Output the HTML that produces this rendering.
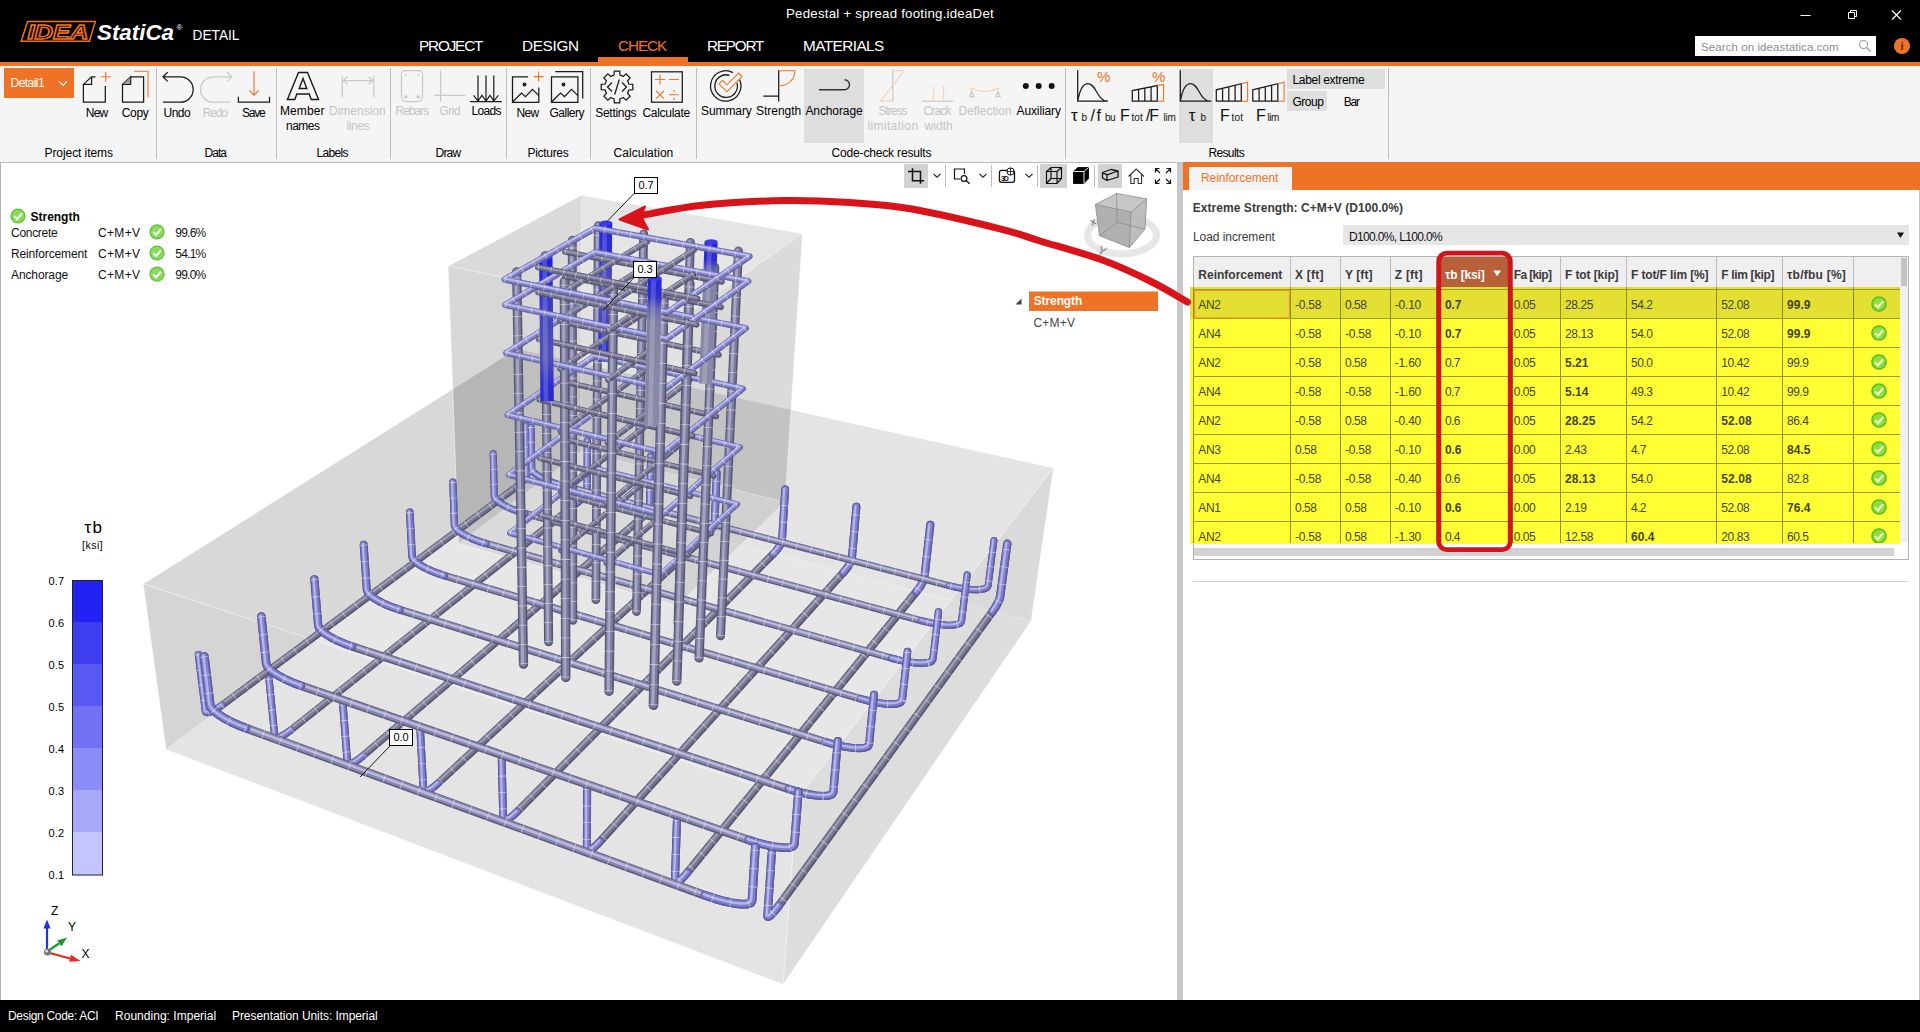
<!DOCTYPE html>
<html lang="en">
<head>
<meta charset="utf-8">
<title>Pedestal + spread footing.ideaDet</title>
<style>
*{box-sizing:border-box;margin:0;padding:0}
html,body{width:1920px;height:1032px;overflow:hidden;background:#fff}
body{position:relative;font-family:"Liberation Sans",sans-serif;font-size:12px;color:#000}
.abs,.t{position:absolute;white-space:nowrap}
.t{line-height:1;}
#hdr{position:absolute;left:0;top:0;width:1920px;height:62px;background:#000}
#oline{position:absolute;left:0;top:62px;width:1920px;height:4px;background:#ee7326}
#rib{position:absolute;left:0;top:66px;width:1920px;height:96px;background:#f5f5f5}
.sep{position:absolute;top:68px;width:1px;height:91px;background:#bdbdbd}
.lbl{position:absolute;white-space:nowrap;font-size:12px;line-height:15px;text-align:center;color:#000;transform:translateX(-50%)}
.dis{color:#c3c3c3}
.grp{position:absolute;white-space:nowrap;font-size:12px;line-height:15px;top:145px;transform:translateX(-50%)}
#status{position:absolute;left:0;top:1000px;width:1920px;height:32px;background:#000;color:#fff}
#view{position:absolute;left:0;top:162px;width:1177px;height:838px;background:#fff;border-left:1px solid #b4b4b4;border-top:1px solid #b8b8b8}
#split{position:absolute;left:1177px;top:162px;width:6px;height:838px;background:#c8c8c8}
#panel{position:absolute;left:1183px;top:162px;width:737px;height:838px;background:#fff}
svg{position:absolute;overflow:visible}
</style>
</head>
<body>
<div id="hdr">
 <svg id="logo" style="left:0;top:0" width="260" height="62" viewBox="0 0 260 62">
  <path d="M27.600 21.600H95.300L89.400 41.200H21.200Z" fill="none" stroke="#ee7326" stroke-width="1.500"/>
  <text x="27.500" y="38.600" font-family="Liberation Sans, sans-serif" font-weight="bold" font-style="italic" font-size="20" textLength="61" lengthAdjust="spacingAndGlyphs" fill="#1a0a00" stroke="#ee7326" stroke-width="1.300">IDEA</text>
  <text x="97" y="39.5" font-family="Liberation Sans, sans-serif" font-weight="bold" font-style="italic" font-size="21.5" textLength="77" lengthAdjust="spacingAndGlyphs" fill="#fff">StatiCa</text>
  <text x="176.5" y="30" font-family="Liberation Sans, sans-serif" font-size="8" fill="#fff">®</text>
  <text x="192.5" y="40" font-family="Liberation Sans, sans-serif" font-size="14.5" textLength="47" lengthAdjust="spacingAndGlyphs" fill="#fff">DETAIL</text>
 </svg>
 <div class="abs" style="left:598px;top:57px;width:90px;height:5px;background:#ee7326"></div>
 <!-- window controls -->
 <svg style="left:1790px;top:0" width="130" height="30" viewBox="0 0 130 30">
  <path d="M10.5 15.5h10" stroke="#fff" stroke-width="1" fill="none"/>
  <path d="M58.500 12.500h6v6h-6z M60.5 12.500v-2h6v6h-2" stroke="#fff" stroke-width="1" fill="none"/>
  <path d="M102 10.500l9 9M111 10.500l-9 9" stroke="#fff" stroke-width="1.1" fill="none"/>
 </svg>
 <!-- search -->
 <div class="abs" style="left:1695px;top:36px;width:181px;height:20px;background:#fff"></div>
 <svg style="left:1857px;top:38px" width="16" height="16" viewBox="0 0 16 16"><circle cx="6.500" cy="6.500" r="4" stroke="#9a9a9a" stroke-width="1.1" fill="none"/><path d="M9.500 9.500l4 4" stroke="#9a9a9a" stroke-width="1.3"/></svg>
 <div class="abs" style="left:1894px;top:38px;width:16px;height:16px;border-radius:8px;background:#ee7326"></div>
 <div class="t" style="left:1900px;top:40px;font-size:11px;line-height:12px;font-weight:bold;color:#5a2300;width:4px;text-align:center">i</div>
</div>
<div id="oline"></div>
<div id="rib"></div>
<div class="abs" style="left:4px;top:68px;width:70px;height:30px;background:#ee7326"></div>
<div class="abs" style="left:804px;top:69px;width:60px;height:73.500px;background:#dedede"></div>
<div class="abs" style="left:1179px;top:69px;width:33.500px;height:73.500px;background:#dedede"></div>
<div class="abs" style="left:1287px;top:69px;width:98px;height:19.500px;background:#dedede"></div>
<div class="abs" style="left:1287px;top:91px;width:40px;height:20px;background:#dedede"></div>
<div class="sep" style="left:156px"></div><div class="sep" style="left:275.500px"></div><div class="sep" style="left:390px"></div>
<div class="sep" style="left:506px"></div><div class="sep" style="left:590px"></div><div class="sep" style="left:696px"></div>
<div class="sep" style="left:1065px"></div><div class="sep" style="left:1388px"></div>
<svg id="ribicons" style="left:0;top:66px" width="1920" height="96" viewBox="0 66 1920 96" fill="none" stroke="#1a1a1a" stroke-width="1.25" stroke-linejoin="miter">
 <!-- chevron -->
 <path d="M59 81.300l4 4 4-4" stroke="#fff" stroke-width="1.2"/>
 <!-- New page -->
 <path d="M95.500 76.800H91.600L83.400 84.400V102.200H105.300V86 M83.400 84.400H91.600V76.800"/>
 <path d="M105.700 71.800v10M100.700 76.800h10" stroke="#ee7326" stroke-width="1.1"/>
 <!-- Copy -->
 <path d="M130.700 76.800H143.600V102.200H122.500V84.400L130.700 76.800V84.400H122.500"/>
 <path d="M123.500 83.800l6.600-6.200v6.200z" fill="#999" stroke="none"/>
 <path d="M134.200 71.300H148V97.200" stroke="#ee7326" stroke-width="1.1"/>
 <!-- Undo -->
 <path d="M167.700 72.200L162.900 76.800L167.700 81.400M162.900 76.800H180.500A12.700 12.700 0 0 1 180.500 102.200H163"/>
 <!-- Redo -->
 <path d="M227.100 72.200L231.900 76.800L227.100 81.400M231.900 76.800H213.300A12.700 12.700 0 0 0 213.300 102.200H230.400" stroke="#c9c9c9"/>
 <!-- Save -->
 <path d="M254 71.300V95M249.500 90.500L254 95.200L258.500 90.500" stroke="#ee7326" stroke-width="1.1"/>
 <path d="M238.400 96.800V102.200H269.500V96.800"/>
 <!-- Member names A -->
 <path d="M298.500 72.500H307.500L318.600 99.500H311.200L309.200 94H296.800L294.800 99.500H287.400Z M299.200 88.500H306.800L303 78.500Z" stroke-width="1.4"/>
 <!-- Dimension lines -->
 <path d="M342.300 76V97.300M373.800 76V97.300M343.500 80.500H372.500M347.500 76.800L343.300 80.500L347.500 84.200M368.600 76.800L372.800 80.500L368.600 84.200" stroke="#c9c9c9"/>
 <!-- Rebars -->
 <rect x="401.500" y="70.500" width="21" height="31" rx="4" stroke="#c9c9c9"/>
 <g fill="#c9c9c9" stroke="none"><circle cx="405.800" cy="75.200" r="1"/><circle cx="418.200" cy="75.200" r="1"/><circle cx="405.800" cy="97" r="1.800"/><circle cx="418.200" cy="97" r="1.800"/></g>
 <!-- Grid -->
 <path d="M440.600 70.500V101.800M434.300 95.300H465.300" stroke="#c9c9c9"/>
 <!-- Loads -->
 <path d="M478 75.500V101M486 75.500V101M493.800 75.500V101M470 101.600H501.800M473.500 95.300L478 101L482 95.300L486 101L490 95.300L493.800 101L498.300 95.300" stroke-width="1.2"/>
 <!-- Pictures New -->
 <path d="M528 76.800H512.500V102.400H538.800V87.500M512.800 101.800L521.500 93L525.500 96.600L532.500 89.300L538.600 95.400"/>
 <circle cx="524.500" cy="84.500" r="1.900" fill="#1a1a1a" stroke="none"/>
 <path d="M538.600 71.600v10M533.600 76.600h10" stroke="#ee7326" stroke-width="1.1"/>
 <!-- Gallery -->
 <path d="M551.500 76.800H577.900V102.400H551.500ZM551.800 101.800L560.500 93L564.500 96.600L571.500 89.300L577.600 95.400M555.300 71.600H582.700V98.500"/>
 <circle cx="563.500" cy="84.500" r="1.900" fill="#1a1a1a" stroke="none"/>
 <!-- Settings gear -->
 <path d="M614.0 75.2L614.3 71.2L619.7 71.2L620.0 75.2A12.2 12.2 0 0 1 623.2 76.5L626.2 73.9L630.1 77.8L627.5 80.8A12.2 12.2 0 0 1 628.8 84.0L632.8 84.3L632.8 89.7L628.8 90.0A12.2 12.2 0 0 1 627.5 93.2L630.1 96.2L626.2 100.1L623.2 97.5A12.2 12.2 0 0 1 620.0 98.8L619.7 102.8L614.3 102.8L614.0 98.8A12.2 12.2 0 0 1 610.8 97.5L607.8 100.1L603.9 96.2L606.5 93.2A12.2 12.2 0 0 1 605.2 90.0L601.2 89.7L601.2 84.3L605.2 84.0A12.2 12.2 0 0 1 606.5 80.8L603.9 77.8L607.8 73.9L610.8 76.5A12.2 12.2 0 0 1 614.0 75.2Z"/>
 <path d="M612 82.500L607.500 87L612 91.500M622 82.500L626.500 87L622 91.500M619.300 79.500L614.700 94.500"/>
 <!-- Calculate -->
 <rect x="651.500" y="71.800" width="30.800" height="30.400"/>
 <path d="M660 74.500V84.500M655 79.500H665M669 79.500H679M656.200 91L663.800 98.600M663.800 91L656.200 98.600M669 94.800H679" stroke="#ee7326" stroke-width="1.1"/>
 <circle cx="674" cy="90.800" r="0.900" fill="#ee7326" stroke="none"/><circle cx="674" cy="98.800" r="0.900" fill="#ee7326" stroke="none"/>
 <!-- Summary -->
 <path d="M739.500 79.500A15.200 15.200 0 1 1 733 72.600" stroke-width="1.3"/>
 <path d="M737 83A11.300 11.300 0 1 1 729.500 75.300" stroke-width="1.3"/>
 <path d="M719 83.800L722.500 80.300L727 84.800L738.500 73L742 76.500L727 91.800Z" stroke="#ee7326" stroke-width="1.1"/>
 <!-- Strength -->
 <path d="M778.700 70.300V101.500M763.300 96.200H778.700"/>
 <path d="M778.700 70.800H795C794.500 80 788 85.500 778.700 86" stroke="#ee7326" stroke-width="1.1"/>
 <!-- Anchorage -->
 <path d="M819 89.800H844.500A5 5 0 0 0 844.500 79.800" stroke="#333" stroke-width="1.4"/>
 <!-- Stress limitation -->
 <path d="M892.800 70.300V101.500" stroke="#c9c9c9"/>
 <path d="M892.800 70.800H904L880.800 101H892.800" stroke="#f6cdb3" stroke-width="1.1"/>
 <!-- Crack width -->
 <path d="M922 101.200H953.300" stroke="#c9c9c9"/>
 <path d="M933.500 86.500C931.500 89.500 935.500 92 933.500 95C932.500 96.800 932.800 98 933.500 99.500M943.500 86.500C941.500 89.500 945.500 92 943.500 95C942.500 96.800 942.800 98 943.500 99.500" stroke="#f6cdb3" stroke-width="1.1"/>
 <!-- Deflection -->
 <path d="M971.700 91.500L969.600 96.500H973.800ZM998 91.500L995.900 96.500H1000.100Z" stroke="#c9c9c9"/>
 <path d="M971.700 88.500Q985 94.500 998 88.500" stroke="#f6cdb3" stroke-width="1.1"/>
 <circle cx="971.700" cy="88.500" r="1.200" fill="#f6cdb3" stroke="none"/><circle cx="998" cy="88.500" r="1.200" fill="#f6cdb3" stroke="none"/>
 <!-- Auxiliary -->
 <g fill="#111" stroke="none"><circle cx="1025.800" cy="86" r="3"/><circle cx="1038.700" cy="86" r="3"/><circle cx="1051.700" cy="86" r="3"/></g>
 <!-- Results: curve 1 -->
 <path d="M1077.700 70.200V101.200H1108M1077.700 101.200C1080 88 1084 83.500 1088 83.500C1096 83.500 1097 100.500 1107 101.200"/>
 <!-- bars 1 -->
 <path d="M1132.3 101.2V90.6L1157.3 85.6V101.2ZM1138.6 89.4V101.2M1144.8 88.1V101.2M1151.1 86.9V101.2"/>
 <path d="M1157.3 85.6L1163.6 84.4V101.2H1157.3" stroke="#ee7326" stroke-width="1.100"/>
 <!-- curve 2 (tau b) -->
 <path d="M1180.300 70.200V101.200H1211.500M1180.300 101.200C1182.600 88 1186.600 83.500 1190.600 83.500C1198.600 83.500 1199.600 100.500 1209.600 101.200"/>
 <!-- bars 2 -->
 <path d="M1216.3 101.2V89.8L1241.3 83.7V101.2ZM1222.6 88.3V101.2M1228.8 86.8V101.2M1235.1 85.2V101.2"/>
 <path d="M1241.3 83.7L1247.6 82.2V101.2H1241.3" stroke="#ee7326" stroke-width="1.100"/>
 <!-- bars 3 -->
 <path d="M1252.8 101.2V89.8L1277.8 83.7V101.2ZM1259.1 88.3V101.2M1265.3 86.8V101.2M1271.6 85.2V101.2"/>
 <path d="M1277.8 83.7L1284.1 82.2V101.2H1277.8" stroke="#ee7326" stroke-width="1.100"/>
</svg>
<div id="view"></div>
<svg id="model" style="left:0;top:0" width="1177" height="998" viewBox="0 0 1177 998">
<path d="M166 749.5 L783.1 984.4 L1031 621.3 L519.5 486.8Z" fill="rgba(0,0,0,0.051)"/>
<path d="M166 749.5 L519.5 486.8 L517 348.7 L143.2 583.9Z" fill="rgba(0,0,0,0.113)"/>
<path d="M519.5 486.8 L1031 621.3 L1053.5 467.9 L517 348.7Z" fill="rgba(0,0,0,0.064)"/>
<path d="M143.2 583.9 L797.1 798.7 L1053.5 467.9 L517 348.7Z" fill="rgba(0,0,0,0.045)"/>
<path d="M166 749.5 L783.1 984.4 L797.1 798.7 L143.2 583.9Z" fill="rgba(0,0,0,0.053)"/>
<path d="M783.1 984.4 L1031 621.3 L1053.5 467.9 L797.1 798.7Z" fill="rgba(0,0,0,0.088)"/>
<path d="M143.2 583.9 L797.1 798.7M797.1 798.7 L1053.5 467.9M1053.5 467.9 L517 348.7M517 348.7 L143.2 583.9M166 749.5 L143.2 583.9M783.1 984.4 L797.1 798.7M1031 621.3 L1053.5 467.9M166 749.5 L783.1 984.4M783.1 984.4 L1031 621.3" stroke="#fff" stroke-width="0.9" fill="none" opacity="0.55"/>
<path d="M519.5 486.8 L517 348.7M166 749.5 L519.5 486.8M519.5 486.8 L1031 621.3" stroke="#fff" stroke-width="0.8" fill="none" opacity="0.35"/>
<path d="M458.4 543.7 L677.3 606.1 L785.1 502.1 L581 451.5Z" fill="rgba(0,0,0,0.0)"/>
<path d="M458.4 543.7 L581 451.5 L581.4 195.2 L448.1 266.1Z" fill="rgba(0,0,0,0.105)"/>
<path d="M581 451.5 L785.1 502.1 L802.5 233.5 L581.4 195.2Z" fill="rgba(0,0,0,0.06)"/>
<path d="M448.1 266.1 L686.7 314.3 L802.5 233.5 L581.4 195.2Z" fill="rgba(0,0,0,0.045)"/>
<path d="M458.4 543.7 L677.3 606.1 L686.7 314.3 L448.1 266.1Z" fill="rgba(0,0,0,0.055)"/>
<path d="M677.3 606.1 L785.1 502.1 L802.5 233.5 L686.7 314.3Z" fill="rgba(0,0,0,0.085)"/>
<path d="M448.1 266.1 L686.7 314.3M686.7 314.3 L802.5 233.5M802.5 233.5 L581.4 195.2M581.4 195.2 L448.1 266.1M458.4 543.7 L448.1 266.1M677.3 606.1 L686.7 314.3M785.1 502.1 L802.5 233.5M458.4 543.7 L677.3 606.1M677.3 606.1 L785.1 502.1" stroke="#fff" stroke-width="0.9" fill="none" opacity="0.55"/>
<path d="M581 451.5 L581.4 195.2M458.4 543.7 L581 451.5M581 451.5 L785.1 502.1" stroke="#fff" stroke-width="0.8" fill="none" opacity="0.35"/>
<defs><linearGradient id="ag1" gradientUnits="userSpaceOnUse" x1="604.8" y1="361.6" x2="605.9" y2="223"><stop offset="0" stop-color="#2828d8"/><stop offset="0.2" stop-color="#3838c8"/><stop offset="0.5" stop-color="#5656b6"/><stop offset="0.8" stop-color="#3030d0"/><stop offset="1" stop-color="#2020e0"/></linearGradient><linearGradient id="ag2" gradientUnits="userSpaceOnUse" x1="705.6" y1="383.8" x2="711.1" y2="241.9"><stop offset="0" stop-color="#8a8aa8"/><stop offset="0.7" stop-color="#8282a4"/><stop offset="0.8" stop-color="#6666b0"/><stop offset="0.87" stop-color="#3030d0"/><stop offset="1" stop-color="#2424dc"/></linearGradient><linearGradient id="ag3" gradientUnits="userSpaceOnUse" x1="547.1" y1="401.3" x2="545.8" y2="257.1"><stop offset="0" stop-color="#2626d6"/><stop offset="0.14" stop-color="#3030cc"/><stop offset="0.3" stop-color="#5050b8"/><stop offset="0.6" stop-color="#4444c4"/><stop offset="0.82" stop-color="#2a2ad8"/><stop offset="1" stop-color="#2020e0"/></linearGradient><linearGradient id="ag4" gradientUnits="userSpaceOnUse" x1="651.4" y1="425.9" x2="654.8" y2="278.2"><stop offset="0" stop-color="#8a8aa8"/><stop offset="0.7" stop-color="#8282a4"/><stop offset="0.8" stop-color="#6666b0"/><stop offset="0.87" stop-color="#3030d0"/><stop offset="1" stop-color="#2424dc"/></linearGradient></defs>
<path d="M198.4 654.5 L205.4 711.3 L206 712.3 L207.3 712.6 L209.4 712.3 L212 711.4 L215.1 709.8 L218.5 707.7 L222 705.3 L516.8 486.7 L519 484.9 L521.2 483 L523.1 480.9 L524.7 479 L525.9 477.2 L526.6 475.6 L526.8 474.3 L526.1 426" stroke="#54546a" stroke-width="7.2" stroke-linecap="round" stroke-linejoin="round" fill="none"/>
<path d="M198.4 654.5 L205.4 711.3 L206 712.3 L207.3 712.6 L209.4 712.3 L212 711.4 L215.1 709.8 L218.5 707.7 L222 705.3 L516.8 486.7 L519 484.9 L521.2 483 L523.1 480.9 L524.7 479 L525.9 477.2 L526.6 475.6 L526.8 474.3 L526.1 426" stroke="#74748e" stroke-width="5.2" stroke-linecap="round" stroke-linejoin="round" fill="none" transform="translate(-0.3 -0.5)"/>
<path d="M198.4 654.5 L205.4 711.3 L206 712.3 L207.3 712.6 L209.4 712.3 L212 711.4 L215.1 709.8 L218.5 707.7 L222 705.3 L516.8 486.7 L519 484.9 L521.2 483 L523.1 480.9 L524.7 479 L525.9 477.2 L526.6 475.6 L526.8 474.3 L526.1 426" stroke="#9c9cb4" stroke-width="2.2" stroke-linecap="round" stroke-linejoin="round" fill="none" transform="translate(-0.8 -1.1)"/>
<path d="M198.4 654.5 L205.4 711.3 L206 712.3 L207.3 712.6 L209.4 712.3 L212 711.4 L215.1 709.8 L218.5 707.7 L222 705.3" stroke="#5c5ca4" stroke-width="7.2" stroke-linecap="round" stroke-linejoin="round" fill="none"/>
<path d="M198.4 654.5 L205.4 711.3 L206 712.3 L207.3 712.6 L209.4 712.3 L212 711.4 L215.1 709.8 L218.5 707.7 L222 705.3" stroke="#8080c8" stroke-width="5" stroke-linecap="round" stroke-linejoin="round" fill="none" transform="translate(-0.3 -0.4)"/>
<path d="M198.4 654.5 L205.4 711.3 L206 712.3 L207.3 712.6 L209.4 712.3 L212 711.4 L215.1 709.8 L218.5 707.7 L222 705.3" stroke="#b4b4ee" stroke-width="2" stroke-linecap="round" stroke-linejoin="round" fill="none" transform="translate(-0.9 -0.8)"/>
<path d="M516.8 486.7 L519 484.9 L521.2 483 L523.1 480.9 L524.7 479 L525.9 477.2 L526.6 475.6 L526.8 474.3 L526.1 426" stroke="#5c5ca4" stroke-width="7.2" stroke-linecap="round" stroke-linejoin="round" fill="none"/>
<path d="M516.8 486.7 L519 484.9 L521.2 483 L523.1 480.9 L524.7 479 L525.9 477.2 L526.6 475.6 L526.8 474.3 L526.1 426" stroke="#8080c8" stroke-width="5" stroke-linecap="round" stroke-linejoin="round" fill="none" transform="translate(-0.3 -0.4)"/>
<path d="M516.8 486.7 L519 484.9 L521.2 483 L523.1 480.9 L524.7 479 L525.9 477.2 L526.6 475.6 L526.8 474.3 L526.1 426" stroke="#b4b4ee" stroke-width="2" stroke-linecap="round" stroke-linejoin="round" fill="none" transform="translate(-0.9 -0.8)"/>
<path d="M198.4 654.5 L205.4 711.3 L206 712.3 L207.3 712.6 L209.4 712.3 L212 711.4 L215.1 709.8 L218.5 707.7 L222 705.3 L516.8 486.7 L519 484.9 L521.2 483 L523.1 480.9 L524.7 479 L525.9 477.2 L526.6 475.6 L526.8 474.3 L526.1 426" stroke="#fff" stroke-opacity="0.5" stroke-width="7.2" stroke-dasharray="0.8 14.4" fill="none"/>
<path d="M269 678.9 L274.8 736.5 L275.3 737.5 L276.6 737.8 L278.6 737.5 L281.1 736.4 L284.1 734.8 L287.4 732.6 L290.9 730 L577.4 502.7 L579.6 500.8 L581.7 498.8 L583.5 496.7 L585.1 494.7 L586.2 492.8 L586.9 491.2 L587.2 489.9 L587.4 441" stroke="#54546a" stroke-width="7.3" stroke-linecap="round" stroke-linejoin="round" fill="none"/>
<path d="M269 678.9 L274.8 736.5 L275.3 737.5 L276.6 737.8 L278.6 737.5 L281.1 736.4 L284.1 734.8 L287.4 732.6 L290.9 730 L577.4 502.7 L579.6 500.8 L581.7 498.8 L583.5 496.7 L585.1 494.7 L586.2 492.8 L586.9 491.2 L587.2 489.9 L587.4 441" stroke="#74748e" stroke-width="5.3" stroke-linecap="round" stroke-linejoin="round" fill="none" transform="translate(-0.3 -0.5)"/>
<path d="M269 678.9 L274.8 736.5 L275.3 737.5 L276.6 737.8 L278.6 737.5 L281.1 736.4 L284.1 734.8 L287.4 732.6 L290.9 730 L577.4 502.7 L579.6 500.8 L581.7 498.8 L583.5 496.7 L585.1 494.7 L586.2 492.8 L586.9 491.2 L587.2 489.9 L587.4 441" stroke="#9c9cb4" stroke-width="2.2" stroke-linecap="round" stroke-linejoin="round" fill="none" transform="translate(-0.8 -1.1)"/>
<path d="M269 678.9 L274.8 736.5 L275.3 737.5 L276.6 737.8 L278.6 737.5 L281.1 736.4 L284.1 734.8 L287.4 732.6 L290.9 730" stroke="#5c5ca4" stroke-width="7.3" stroke-linecap="round" stroke-linejoin="round" fill="none"/>
<path d="M269 678.9 L274.8 736.5 L275.3 737.5 L276.6 737.8 L278.6 737.5 L281.1 736.4 L284.1 734.8 L287.4 732.6 L290.9 730" stroke="#8080c8" stroke-width="5.1" stroke-linecap="round" stroke-linejoin="round" fill="none" transform="translate(-0.3 -0.4)"/>
<path d="M269 678.9 L274.8 736.5 L275.3 737.5 L276.6 737.8 L278.6 737.5 L281.1 736.4 L284.1 734.8 L287.4 732.6 L290.9 730" stroke="#b4b4ee" stroke-width="2.1" stroke-linecap="round" stroke-linejoin="round" fill="none" transform="translate(-0.9 -0.8)"/>
<path d="M577.4 502.7 L579.6 500.8 L581.7 498.8 L583.5 496.7 L585.1 494.7 L586.2 492.8 L586.9 491.2 L587.2 489.9 L587.4 441" stroke="#5c5ca4" stroke-width="7.3" stroke-linecap="round" stroke-linejoin="round" fill="none"/>
<path d="M577.4 502.7 L579.6 500.8 L581.7 498.8 L583.5 496.7 L585.1 494.7 L586.2 492.8 L586.9 491.2 L587.2 489.9 L587.4 441" stroke="#8080c8" stroke-width="5.1" stroke-linecap="round" stroke-linejoin="round" fill="none" transform="translate(-0.3 -0.4)"/>
<path d="M577.4 502.7 L579.6 500.8 L581.7 498.8 L583.5 496.7 L585.1 494.7 L586.2 492.8 L586.9 491.2 L587.2 489.9 L587.4 441" stroke="#b4b4ee" stroke-width="2.1" stroke-linecap="round" stroke-linejoin="round" fill="none" transform="translate(-0.9 -0.8)"/>
<path d="M269 678.9 L274.8 736.5 L275.3 737.5 L276.6 737.8 L278.6 737.5 L281.1 736.4 L284.1 734.8 L287.4 732.6 L290.9 730 L577.4 502.7 L579.6 500.8 L581.7 498.8 L583.5 496.7 L585.1 494.7 L586.2 492.8 L586.9 491.2 L587.2 489.9 L587.4 441" stroke="#fff" stroke-opacity="0.5" stroke-width="7.3" stroke-dasharray="0.8 14.7" fill="none"/>
<path d="M342.9 704.4 L347.4 762.9 L347.9 763.9 L349.1 764.2 L351 763.8 L353.5 762.6 L356.4 760.9 L359.6 758.6 L362.9 755.9 L640.2 519.2 L642.3 517.3 L644.3 515.2 L646.1 513.1 L647.6 511 L648.8 509.1 L649.5 507.4 L649.8 506.1 L650.9 456.5" stroke="#54546a" stroke-width="7.5" stroke-linecap="round" stroke-linejoin="round" fill="none"/>
<path d="M342.9 704.4 L347.4 762.9 L347.9 763.9 L349.1 764.2 L351 763.8 L353.5 762.6 L356.4 760.9 L359.6 758.6 L362.9 755.9 L640.2 519.2 L642.3 517.3 L644.3 515.2 L646.1 513.1 L647.6 511 L648.8 509.1 L649.5 507.4 L649.8 506.1 L650.9 456.5" stroke="#74748e" stroke-width="5.4" stroke-linecap="round" stroke-linejoin="round" fill="none" transform="translate(-0.3 -0.5)"/>
<path d="M342.9 704.4 L347.4 762.9 L347.9 763.9 L349.1 764.2 L351 763.8 L353.5 762.6 L356.4 760.9 L359.6 758.6 L362.9 755.9 L640.2 519.2 L642.3 517.3 L644.3 515.2 L646.1 513.1 L647.6 511 L648.8 509.1 L649.5 507.4 L649.8 506.1 L650.9 456.5" stroke="#9c9cb4" stroke-width="2.2" stroke-linecap="round" stroke-linejoin="round" fill="none" transform="translate(-0.8 -1.1)"/>
<path d="M342.9 704.4 L347.4 762.9 L347.9 763.9 L349.1 764.2 L351 763.8 L353.5 762.6 L356.4 760.9 L359.6 758.6 L362.9 755.9" stroke="#5c5ca4" stroke-width="7.5" stroke-linecap="round" stroke-linejoin="round" fill="none"/>
<path d="M342.9 704.4 L347.4 762.9 L347.9 763.9 L349.1 764.2 L351 763.8 L353.5 762.6 L356.4 760.9 L359.6 758.6 L362.9 755.9" stroke="#8080c8" stroke-width="5.2" stroke-linecap="round" stroke-linejoin="round" fill="none" transform="translate(-0.3 -0.4)"/>
<path d="M342.9 704.4 L347.4 762.9 L347.9 763.9 L349.1 764.2 L351 763.8 L353.5 762.6 L356.4 760.9 L359.6 758.6 L362.9 755.9" stroke="#b4b4ee" stroke-width="2.1" stroke-linecap="round" stroke-linejoin="round" fill="none" transform="translate(-0.9 -0.8)"/>
<path d="M640.2 519.2 L642.3 517.3 L644.3 515.2 L646.1 513.1 L647.6 511 L648.8 509.1 L649.5 507.4 L649.8 506.1 L650.9 456.5" stroke="#5c5ca4" stroke-width="7.5" stroke-linecap="round" stroke-linejoin="round" fill="none"/>
<path d="M640.2 519.2 L642.3 517.3 L644.3 515.2 L646.1 513.1 L647.6 511 L648.8 509.1 L649.5 507.4 L649.8 506.1 L650.9 456.5" stroke="#8080c8" stroke-width="5.2" stroke-linecap="round" stroke-linejoin="round" fill="none" transform="translate(-0.3 -0.4)"/>
<path d="M640.2 519.2 L642.3 517.3 L644.3 515.2 L646.1 513.1 L647.6 511 L648.8 509.1 L649.5 507.4 L649.8 506.1 L650.9 456.5" stroke="#b4b4ee" stroke-width="2.1" stroke-linecap="round" stroke-linejoin="round" fill="none" transform="translate(-0.9 -0.8)"/>
<path d="M342.9 704.4 L347.4 762.9 L347.9 763.9 L349.1 764.2 L351 763.8 L353.5 762.6 L356.4 760.9 L359.6 758.6 L362.9 755.9 L640.2 519.2 L642.3 517.3 L644.3 515.2 L646.1 513.1 L647.6 511 L648.8 509.1 L649.5 507.4 L649.8 506.1 L650.9 456.5" stroke="#fff" stroke-opacity="0.5" stroke-width="7.5" stroke-dasharray="0.8 15" fill="none"/>
<path d="M420.3 731.2 L423.4 790.5 L423.9 791.5 L425 791.8 L426.8 791.3 L429.2 790.1 L432 788.3 L435.1 785.9 L438.3 783 L705.4 536.3 L707.4 534.3 L709.3 532.2 L711.1 530 L712.5 527.9 L713.7 525.9 L714.4 524.2 L714.6 522.9 L716.8 472.7" stroke="#54546a" stroke-width="7.6" stroke-linecap="round" stroke-linejoin="round" fill="none"/>
<path d="M420.3 731.2 L423.4 790.5 L423.9 791.5 L425 791.8 L426.8 791.3 L429.2 790.1 L432 788.3 L435.1 785.9 L438.3 783 L705.4 536.3 L707.4 534.3 L709.3 532.2 L711.1 530 L712.5 527.9 L713.7 525.9 L714.4 524.2 L714.6 522.9 L716.8 472.7" stroke="#74748e" stroke-width="5.5" stroke-linecap="round" stroke-linejoin="round" fill="none" transform="translate(-0.3 -0.5)"/>
<path d="M420.3 731.2 L423.4 790.5 L423.9 791.5 L425 791.8 L426.8 791.3 L429.2 790.1 L432 788.3 L435.1 785.9 L438.3 783 L705.4 536.3 L707.4 534.3 L709.3 532.2 L711.1 530 L712.5 527.9 L713.7 525.9 L714.4 524.2 L714.6 522.9 L716.8 472.7" stroke="#9c9cb4" stroke-width="2.3" stroke-linecap="round" stroke-linejoin="round" fill="none" transform="translate(-0.8 -1.1)"/>
<path d="M420.3 731.2 L423.4 790.5 L423.9 791.5 L425 791.8 L426.8 791.3 L429.2 790.1 L432 788.3 L435.1 785.9 L438.3 783" stroke="#5c5ca4" stroke-width="7.6" stroke-linecap="round" stroke-linejoin="round" fill="none"/>
<path d="M420.3 731.2 L423.4 790.5 L423.9 791.5 L425 791.8 L426.8 791.3 L429.2 790.1 L432 788.3 L435.1 785.9 L438.3 783" stroke="#8080c8" stroke-width="5.3" stroke-linecap="round" stroke-linejoin="round" fill="none" transform="translate(-0.3 -0.4)"/>
<path d="M420.3 731.2 L423.4 790.5 L423.9 791.5 L425 791.8 L426.8 791.3 L429.2 790.1 L432 788.3 L435.1 785.9 L438.3 783" stroke="#b4b4ee" stroke-width="2.1" stroke-linecap="round" stroke-linejoin="round" fill="none" transform="translate(-0.9 -0.8)"/>
<path d="M705.4 536.3 L707.4 534.3 L709.3 532.2 L711.1 530 L712.5 527.9 L713.7 525.9 L714.4 524.2 L714.6 522.9 L716.8 472.7" stroke="#5c5ca4" stroke-width="7.6" stroke-linecap="round" stroke-linejoin="round" fill="none"/>
<path d="M705.4 536.3 L707.4 534.3 L709.3 532.2 L711.1 530 L712.5 527.9 L713.7 525.9 L714.4 524.2 L714.6 522.9 L716.8 472.7" stroke="#8080c8" stroke-width="5.3" stroke-linecap="round" stroke-linejoin="round" fill="none" transform="translate(-0.3 -0.4)"/>
<path d="M705.4 536.3 L707.4 534.3 L709.3 532.2 L711.1 530 L712.5 527.9 L713.7 525.9 L714.4 524.2 L714.6 522.9 L716.8 472.7" stroke="#b4b4ee" stroke-width="2.1" stroke-linecap="round" stroke-linejoin="round" fill="none" transform="translate(-0.9 -0.8)"/>
<path d="M420.3 731.2 L423.4 790.5 L423.9 791.5 L425 791.8 L426.8 791.3 L429.2 790.1 L432 788.3 L435.1 785.9 L438.3 783 L705.4 536.3 L707.4 534.3 L709.3 532.2 L711.1 530 L712.5 527.9 L713.7 525.9 L714.4 524.2 L714.6 522.9 L716.8 472.7" stroke="#fff" stroke-opacity="0.5" stroke-width="7.6" stroke-dasharray="0.8 15.3" fill="none"/>
<path d="M501.7 759.3 L503.2 819.5 L503.6 820.5 L504.6 820.7 L506.4 820.2 L508.6 818.9 L511.3 816.9 L514.3 814.4 L517.4 811.5 L773 554.2 L775 552.1 L776.8 549.9 L778.5 547.6 L779.9 545.4 L781 543.4 L781.7 541.7 L782 540.3 L785.2 489.4" stroke="#54546a" stroke-width="7.8" stroke-linecap="round" stroke-linejoin="round" fill="none"/>
<path d="M501.7 759.3 L503.2 819.5 L503.6 820.5 L504.6 820.7 L506.4 820.2 L508.6 818.9 L511.3 816.9 L514.3 814.4 L517.4 811.5 L773 554.2 L775 552.1 L776.8 549.9 L778.5 547.6 L779.9 545.4 L781 543.4 L781.7 541.7 L782 540.3 L785.2 489.4" stroke="#74748e" stroke-width="5.6" stroke-linecap="round" stroke-linejoin="round" fill="none" transform="translate(-0.3 -0.5)"/>
<path d="M501.7 759.3 L503.2 819.5 L503.6 820.5 L504.6 820.7 L506.4 820.2 L508.6 818.9 L511.3 816.9 L514.3 814.4 L517.4 811.5 L773 554.2 L775 552.1 L776.8 549.9 L778.5 547.6 L779.9 545.4 L781 543.4 L781.7 541.7 L782 540.3 L785.2 489.4" stroke="#9c9cb4" stroke-width="2.3" stroke-linecap="round" stroke-linejoin="round" fill="none" transform="translate(-0.8 -1.1)"/>
<path d="M501.7 759.3 L503.2 819.5 L503.6 820.5 L504.6 820.7 L506.4 820.2 L508.6 818.9 L511.3 816.9 L514.3 814.4 L517.4 811.5" stroke="#5c5ca4" stroke-width="7.8" stroke-linecap="round" stroke-linejoin="round" fill="none"/>
<path d="M501.7 759.3 L503.2 819.5 L503.6 820.5 L504.6 820.7 L506.4 820.2 L508.6 818.9 L511.3 816.9 L514.3 814.4 L517.4 811.5" stroke="#8080c8" stroke-width="5.5" stroke-linecap="round" stroke-linejoin="round" fill="none" transform="translate(-0.3 -0.4)"/>
<path d="M501.7 759.3 L503.2 819.5 L503.6 820.5 L504.6 820.7 L506.4 820.2 L508.6 818.9 L511.3 816.9 L514.3 814.4 L517.4 811.5" stroke="#b4b4ee" stroke-width="2.2" stroke-linecap="round" stroke-linejoin="round" fill="none" transform="translate(-0.9 -0.8)"/>
<path d="M773 554.2 L775 552.1 L776.8 549.9 L778.5 547.6 L779.9 545.4 L781 543.4 L781.7 541.7 L782 540.3 L785.2 489.4" stroke="#5c5ca4" stroke-width="7.8" stroke-linecap="round" stroke-linejoin="round" fill="none"/>
<path d="M773 554.2 L775 552.1 L776.8 549.9 L778.5 547.6 L779.9 545.4 L781 543.4 L781.7 541.7 L782 540.3 L785.2 489.4" stroke="#8080c8" stroke-width="5.5" stroke-linecap="round" stroke-linejoin="round" fill="none" transform="translate(-0.3 -0.4)"/>
<path d="M773 554.2 L775 552.1 L776.8 549.9 L778.5 547.6 L779.9 545.4 L781 543.4 L781.7 541.7 L782 540.3 L785.2 489.4" stroke="#b4b4ee" stroke-width="2.2" stroke-linecap="round" stroke-linejoin="round" fill="none" transform="translate(-0.9 -0.8)"/>
<path d="M501.7 759.3 L503.2 819.5 L503.6 820.5 L504.6 820.7 L506.4 820.2 L508.6 818.9 L511.3 816.9 L514.3 814.4 L517.4 811.5 L773 554.2 L775 552.1 L776.8 549.9 L778.5 547.6 L779.9 545.4 L781 543.4 L781.7 541.7 L782 540.3 L785.2 489.4" stroke="#fff" stroke-opacity="0.5" stroke-width="7.8" stroke-dasharray="0.8 15.6" fill="none"/>
<path d="M587.1 788.9 L586.9 849.9 L587.2 850.9 L588.2 851.1 L589.8 850.5 L592 849.1 L594.5 847 L597.3 844.4 L600.3 841.3 L843.3 572.6 L845.1 570.5 L846.9 568.2 L848.5 565.9 L849.8 563.6 L850.9 561.6 L851.6 559.8 L851.9 558.4 L856.4 506.8" stroke="#54546a" stroke-width="8" stroke-linecap="round" stroke-linejoin="round" fill="none"/>
<path d="M587.1 788.9 L586.9 849.9 L587.2 850.9 L588.2 851.1 L589.8 850.5 L592 849.1 L594.5 847 L597.3 844.4 L600.3 841.3 L843.3 572.6 L845.1 570.5 L846.9 568.2 L848.5 565.9 L849.8 563.6 L850.9 561.6 L851.6 559.8 L851.9 558.4 L856.4 506.8" stroke="#74748e" stroke-width="5.7" stroke-linecap="round" stroke-linejoin="round" fill="none" transform="translate(-0.3 -0.5)"/>
<path d="M587.1 788.9 L586.9 849.9 L587.2 850.9 L588.2 851.1 L589.8 850.5 L592 849.1 L594.5 847 L597.3 844.4 L600.3 841.3 L843.3 572.6 L845.1 570.5 L846.9 568.2 L848.5 565.9 L849.8 563.6 L850.9 561.6 L851.6 559.8 L851.9 558.4 L856.4 506.8" stroke="#9c9cb4" stroke-width="2.4" stroke-linecap="round" stroke-linejoin="round" fill="none" transform="translate(-0.8 -1.1)"/>
<path d="M587.1 788.9 L586.9 849.9 L587.2 850.9 L588.2 851.1 L589.8 850.5 L592 849.1 L594.5 847 L597.3 844.4 L600.3 841.3" stroke="#5c5ca4" stroke-width="8" stroke-linecap="round" stroke-linejoin="round" fill="none"/>
<path d="M587.1 788.9 L586.9 849.9 L587.2 850.9 L588.2 851.1 L589.8 850.5 L592 849.1 L594.5 847 L597.3 844.4 L600.3 841.3" stroke="#8080c8" stroke-width="5.6" stroke-linecap="round" stroke-linejoin="round" fill="none" transform="translate(-0.3 -0.4)"/>
<path d="M587.1 788.9 L586.9 849.9 L587.2 850.9 L588.2 851.1 L589.8 850.5 L592 849.1 L594.5 847 L597.3 844.4 L600.3 841.3" stroke="#b4b4ee" stroke-width="2.2" stroke-linecap="round" stroke-linejoin="round" fill="none" transform="translate(-0.9 -0.8)"/>
<path d="M843.3 572.6 L845.1 570.5 L846.9 568.2 L848.5 565.9 L849.8 563.6 L850.9 561.6 L851.6 559.8 L851.9 558.4 L856.4 506.8" stroke="#5c5ca4" stroke-width="8" stroke-linecap="round" stroke-linejoin="round" fill="none"/>
<path d="M843.3 572.6 L845.1 570.5 L846.9 568.2 L848.5 565.9 L849.8 563.6 L850.9 561.6 L851.6 559.8 L851.9 558.4 L856.4 506.8" stroke="#8080c8" stroke-width="5.6" stroke-linecap="round" stroke-linejoin="round" fill="none" transform="translate(-0.3 -0.4)"/>
<path d="M843.3 572.6 L845.1 570.5 L846.9 568.2 L848.5 565.9 L849.8 563.6 L850.9 561.6 L851.6 559.8 L851.9 558.4 L856.4 506.8" stroke="#b4b4ee" stroke-width="2.2" stroke-linecap="round" stroke-linejoin="round" fill="none" transform="translate(-0.9 -0.8)"/>
<path d="M587.1 788.9 L586.9 849.9 L587.2 850.9 L588.2 851.1 L589.8 850.5 L592 849.1 L594.5 847 L597.3 844.4 L600.3 841.3 L843.3 572.6 L845.1 570.5 L846.9 568.2 L848.5 565.9 L849.8 563.6 L850.9 561.6 L851.6 559.8 L851.9 558.4 L856.4 506.8" stroke="#fff" stroke-opacity="0.5" stroke-width="8" stroke-dasharray="0.8 15.9" fill="none"/>
<path d="M677 819.9 L674.9 881.9 L675.2 882.9 L676.1 883.1 L677.5 882.4 L679.5 880.9 L681.9 878.7 L684.6 875.8 L687.4 872.6 L916.3 591.9 L918 589.6 L919.7 587.3 L921.2 584.9 L922.5 582.5 L923.5 580.4 L924.2 578.6 L924.5 577.2 L930.3 524.9" stroke="#54546a" stroke-width="8.1" stroke-linecap="round" stroke-linejoin="round" fill="none"/>
<path d="M677 819.9 L674.9 881.9 L675.2 882.9 L676.1 883.1 L677.5 882.4 L679.5 880.9 L681.9 878.7 L684.6 875.8 L687.4 872.6 L916.3 591.9 L918 589.6 L919.7 587.3 L921.2 584.9 L922.5 582.5 L923.5 580.4 L924.2 578.6 L924.5 577.2 L930.3 524.9" stroke="#74748e" stroke-width="5.9" stroke-linecap="round" stroke-linejoin="round" fill="none" transform="translate(-0.3 -0.5)"/>
<path d="M677 819.9 L674.9 881.9 L675.2 882.9 L676.1 883.1 L677.5 882.4 L679.5 880.9 L681.9 878.7 L684.6 875.8 L687.4 872.6 L916.3 591.9 L918 589.6 L919.7 587.3 L921.2 584.9 L922.5 582.5 L923.5 580.4 L924.2 578.6 L924.5 577.2 L930.3 524.9" stroke="#9c9cb4" stroke-width="2.4" stroke-linecap="round" stroke-linejoin="round" fill="none" transform="translate(-0.8 -1.1)"/>
<path d="M677 819.9 L674.9 881.9 L675.2 882.9 L676.1 883.1 L677.5 882.4 L679.5 880.9 L681.9 878.7 L684.6 875.8 L687.4 872.6" stroke="#5c5ca4" stroke-width="8.1" stroke-linecap="round" stroke-linejoin="round" fill="none"/>
<path d="M677 819.9 L674.9 881.9 L675.2 882.9 L676.1 883.1 L677.5 882.4 L679.5 880.9 L681.9 878.7 L684.6 875.8 L687.4 872.6" stroke="#8080c8" stroke-width="5.7" stroke-linecap="round" stroke-linejoin="round" fill="none" transform="translate(-0.3 -0.4)"/>
<path d="M677 819.9 L674.9 881.9 L675.2 882.9 L676.1 883.1 L677.5 882.4 L679.5 880.9 L681.9 878.7 L684.6 875.8 L687.4 872.6" stroke="#b4b4ee" stroke-width="2.3" stroke-linecap="round" stroke-linejoin="round" fill="none" transform="translate(-0.9 -0.8)"/>
<path d="M916.3 591.9 L918 589.6 L919.7 587.3 L921.2 584.9 L922.5 582.5 L923.5 580.4 L924.2 578.6 L924.5 577.2 L930.3 524.9" stroke="#5c5ca4" stroke-width="8.1" stroke-linecap="round" stroke-linejoin="round" fill="none"/>
<path d="M916.3 591.9 L918 589.6 L919.7 587.3 L921.2 584.9 L922.5 582.5 L923.5 580.4 L924.2 578.6 L924.5 577.2 L930.3 524.9" stroke="#8080c8" stroke-width="5.7" stroke-linecap="round" stroke-linejoin="round" fill="none" transform="translate(-0.3 -0.4)"/>
<path d="M916.3 591.9 L918 589.6 L919.7 587.3 L921.2 584.9 L922.5 582.5 L923.5 580.4 L924.2 578.6 L924.5 577.2 L930.3 524.9" stroke="#b4b4ee" stroke-width="2.3" stroke-linecap="round" stroke-linejoin="round" fill="none" transform="translate(-0.9 -0.8)"/>
<path d="M677 819.9 L674.9 881.9 L675.2 882.9 L676.1 883.1 L677.5 882.4 L679.5 880.9 L681.9 878.7 L684.6 875.8 L687.4 872.6 L916.3 591.9 L918 589.6 L919.7 587.3 L921.2 584.9 L922.5 582.5 L923.5 580.4 L924.2 578.6 L924.5 577.2 L930.3 524.9" stroke="#fff" stroke-opacity="0.5" stroke-width="8.1" stroke-dasharray="0.8 16.3" fill="none"/>
<path d="M771.8 852.7 L767.5 915.6 L767.7 916.6 L768.5 916.7 L769.9 915.9 L771.7 914.3 L773.9 911.9 L776.4 909 L779 905.5 L992.3 611.9 L993.9 609.5 L995.5 607.1 L996.9 604.6 L998.1 602.2 L999.1 600 L999.8 598.2 L1000.1 596.8 L1007.3 543.7" stroke="#54546a" stroke-width="8.3" stroke-linecap="round" stroke-linejoin="round" fill="none"/>
<path d="M771.8 852.7 L767.5 915.6 L767.7 916.6 L768.5 916.7 L769.9 915.9 L771.7 914.3 L773.9 911.9 L776.4 909 L779 905.5 L992.3 611.9 L993.9 609.5 L995.5 607.1 L996.9 604.6 L998.1 602.2 L999.1 600 L999.8 598.2 L1000.1 596.8 L1007.3 543.7" stroke="#74748e" stroke-width="6" stroke-linecap="round" stroke-linejoin="round" fill="none" transform="translate(-0.3 -0.5)"/>
<path d="M771.8 852.7 L767.5 915.6 L767.7 916.6 L768.5 916.7 L769.9 915.9 L771.7 914.3 L773.9 911.9 L776.4 909 L779 905.5 L992.3 611.9 L993.9 609.5 L995.5 607.1 L996.9 604.6 L998.1 602.2 L999.1 600 L999.8 598.2 L1000.1 596.8 L1007.3 543.7" stroke="#9c9cb4" stroke-width="2.5" stroke-linecap="round" stroke-linejoin="round" fill="none" transform="translate(-0.8 -1.1)"/>
<path d="M771.8 852.7 L767.5 915.6 L767.7 916.6 L768.5 916.7 L769.9 915.9 L771.7 914.3 L773.9 911.9 L776.4 909 L779 905.5" stroke="#5c5ca4" stroke-width="8.3" stroke-linecap="round" stroke-linejoin="round" fill="none"/>
<path d="M771.8 852.7 L767.5 915.6 L767.7 916.6 L768.5 916.7 L769.9 915.9 L771.7 914.3 L773.9 911.9 L776.4 909 L779 905.5" stroke="#8080c8" stroke-width="5.8" stroke-linecap="round" stroke-linejoin="round" fill="none" transform="translate(-0.3 -0.4)"/>
<path d="M771.8 852.7 L767.5 915.6 L767.7 916.6 L768.5 916.7 L769.9 915.9 L771.7 914.3 L773.9 911.9 L776.4 909 L779 905.5" stroke="#b4b4ee" stroke-width="2.3" stroke-linecap="round" stroke-linejoin="round" fill="none" transform="translate(-0.9 -0.8)"/>
<path d="M992.3 611.9 L993.9 609.5 L995.5 607.1 L996.9 604.6 L998.1 602.2 L999.1 600 L999.8 598.2 L1000.1 596.8 L1007.3 543.7" stroke="#5c5ca4" stroke-width="8.3" stroke-linecap="round" stroke-linejoin="round" fill="none"/>
<path d="M992.3 611.9 L993.9 609.5 L995.5 607.1 L996.9 604.6 L998.1 602.2 L999.1 600 L999.8 598.2 L1000.1 596.8 L1007.3 543.7" stroke="#8080c8" stroke-width="5.8" stroke-linecap="round" stroke-linejoin="round" fill="none" transform="translate(-0.3 -0.4)"/>
<path d="M992.3 611.9 L993.9 609.5 L995.5 607.1 L996.9 604.6 L998.1 602.2 L999.1 600 L999.8 598.2 L1000.1 596.8 L1007.3 543.7" stroke="#b4b4ee" stroke-width="2.3" stroke-linecap="round" stroke-linejoin="round" fill="none" transform="translate(-0.9 -0.8)"/>
<path d="M771.8 852.7 L767.5 915.6 L767.7 916.6 L768.5 916.7 L769.9 915.9 L771.7 914.3 L773.9 911.9 L776.4 909 L779 905.5 L992.3 611.9 L993.9 609.5 L995.5 607.1 L996.9 604.6 L998.1 602.2 L999.1 600 L999.8 598.2 L1000.1 596.8 L1007.3 543.7" stroke="#fff" stroke-opacity="0.5" stroke-width="8.3" stroke-dasharray="0.8 16.7" fill="none"/>
<path d="M531.2 427.3 L531.8 468.6 L532.5 470.8 L534.8 473.3 L538.3 475.9 L543.1 478.5 L548.8 481 L555.1 483.3 L561.9 485.3 L949 585.7 L957.3 587.6 L965.4 588.9 L972.7 589.7 L979 589.7 L983.8 589 L986.9 587.7 L988.1 585.8 L994 540.4" stroke="#5c5c7a" stroke-width="6.9" stroke-linecap="round" stroke-linejoin="round" fill="none"/>
<path d="M531.2 427.3 L531.8 468.6 L532.5 470.8 L534.8 473.3 L538.3 475.9 L543.1 478.5 L548.8 481 L555.1 483.3 L561.9 485.3 L949 585.7 L957.3 587.6 L965.4 588.9 L972.7 589.7 L979 589.7 L983.8 589 L986.9 587.7 L988.1 585.8 L994 540.4" stroke="#8686ae" stroke-width="4.9" stroke-linecap="round" stroke-linejoin="round" fill="none" transform="translate(-0.3 -0.5)"/>
<path d="M531.2 427.3 L531.8 468.6 L532.5 470.8 L534.8 473.3 L538.3 475.9 L543.1 478.5 L548.8 481 L555.1 483.3 L561.9 485.3 L949 585.7 L957.3 587.6 L965.4 588.9 L972.7 589.7 L979 589.7 L983.8 589 L986.9 587.7 L988.1 585.8 L994 540.4" stroke="#babade" stroke-width="2.1" stroke-linecap="round" stroke-linejoin="round" fill="none" transform="translate(-0.8 -1.1)"/>
<path d="M531.2 427.3 L531.8 468.6 L532.5 470.8 L534.8 473.3 L538.3 475.9 L543.1 478.5 L548.8 481 L555.1 483.3 L561.9 485.3" stroke="#5c5ca4" stroke-width="6.9" stroke-linecap="round" stroke-linejoin="round" fill="none"/>
<path d="M531.2 427.3 L531.8 468.6 L532.5 470.8 L534.8 473.3 L538.3 475.9 L543.1 478.5 L548.8 481 L555.1 483.3 L561.9 485.3" stroke="#8080c8" stroke-width="4.8" stroke-linecap="round" stroke-linejoin="round" fill="none" transform="translate(-0.3 -0.4)"/>
<path d="M531.2 427.3 L531.8 468.6 L532.5 470.8 L534.8 473.3 L538.3 475.9 L543.1 478.5 L548.8 481 L555.1 483.3 L561.9 485.3" stroke="#b4b4ee" stroke-width="1.9" stroke-linecap="round" stroke-linejoin="round" fill="none" transform="translate(-0.9 -0.8)"/>
<path d="M949 585.7 L957.3 587.6 L965.4 588.9 L972.7 589.7 L979 589.7 L983.8 589 L986.9 587.7 L988.1 585.8 L994 540.4" stroke="#5c5ca4" stroke-width="6.9" stroke-linecap="round" stroke-linejoin="round" fill="none"/>
<path d="M949 585.7 L957.3 587.6 L965.4 588.9 L972.7 589.7 L979 589.7 L983.8 589 L986.9 587.7 L988.1 585.8 L994 540.4" stroke="#8080c8" stroke-width="4.8" stroke-linecap="round" stroke-linejoin="round" fill="none" transform="translate(-0.3 -0.4)"/>
<path d="M949 585.7 L957.3 587.6 L965.4 588.9 L972.7 589.7 L979 589.7 L983.8 589 L986.9 587.7 L988.1 585.8 L994 540.4" stroke="#b4b4ee" stroke-width="1.9" stroke-linecap="round" stroke-linejoin="round" fill="none" transform="translate(-0.9 -0.8)"/>
<path d="M531.2 427.3 L531.8 468.6 L532.5 470.8 L534.8 473.3 L538.3 475.9 L543.1 478.5 L548.8 481 L555.1 483.3 L561.9 485.3 L949 585.7 L957.3 587.6 L965.4 588.9 L972.7 589.7 L979 589.7 L983.8 589 L986.9 587.7 L988.1 585.8 L994 540.4" stroke="#fff" stroke-opacity="0.5" stroke-width="6.9" stroke-dasharray="0.8 13.7" fill="none"/>
<path d="M493.3 453.9 L494.3 496.2 L495.1 498.4 L497.4 500.9 L501.1 503.6 L506 506.4 L511.8 509 L518.3 511.4 L525.1 513.5 L921.3 620.7 L930 622.8 L938.2 624.2 L945.8 625.1 L952.2 625.2 L957.1 624.5 L960.2 623.2 L961.5 621.3 L967.2 574.9" stroke="#5c5c7a" stroke-width="7.1" stroke-linecap="round" stroke-linejoin="round" fill="none"/>
<path d="M493.3 453.9 L494.3 496.2 L495.1 498.4 L497.4 500.9 L501.1 503.6 L506 506.4 L511.8 509 L518.3 511.4 L525.1 513.5 L921.3 620.7 L930 622.8 L938.2 624.2 L945.8 625.1 L952.2 625.2 L957.1 624.5 L960.2 623.2 L961.5 621.3 L967.2 574.9" stroke="#8686ae" stroke-width="5.1" stroke-linecap="round" stroke-linejoin="round" fill="none" transform="translate(-0.3 -0.5)"/>
<path d="M493.3 453.9 L494.3 496.2 L495.1 498.4 L497.4 500.9 L501.1 503.6 L506 506.4 L511.8 509 L518.3 511.4 L525.1 513.5 L921.3 620.7 L930 622.8 L938.2 624.2 L945.8 625.1 L952.2 625.2 L957.1 624.5 L960.2 623.2 L961.5 621.3 L967.2 574.9" stroke="#babade" stroke-width="2.1" stroke-linecap="round" stroke-linejoin="round" fill="none" transform="translate(-0.8 -1.1)"/>
<path d="M493.3 453.9 L494.3 496.2 L495.1 498.4 L497.4 500.9 L501.1 503.6 L506 506.4 L511.8 509 L518.3 511.4 L525.1 513.5" stroke="#5c5ca4" stroke-width="7.1" stroke-linecap="round" stroke-linejoin="round" fill="none"/>
<path d="M493.3 453.9 L494.3 496.2 L495.1 498.4 L497.4 500.9 L501.1 503.6 L506 506.4 L511.8 509 L518.3 511.4 L525.1 513.5" stroke="#8080c8" stroke-width="5" stroke-linecap="round" stroke-linejoin="round" fill="none" transform="translate(-0.3 -0.4)"/>
<path d="M493.3 453.9 L494.3 496.2 L495.1 498.4 L497.4 500.9 L501.1 503.6 L506 506.4 L511.8 509 L518.3 511.4 L525.1 513.5" stroke="#b4b4ee" stroke-width="2" stroke-linecap="round" stroke-linejoin="round" fill="none" transform="translate(-0.9 -0.8)"/>
<path d="M921.3 620.7 L930 622.8 L938.2 624.2 L945.8 625.1 L952.2 625.2 L957.1 624.5 L960.2 623.2 L961.5 621.3 L967.2 574.9" stroke="#5c5ca4" stroke-width="7.1" stroke-linecap="round" stroke-linejoin="round" fill="none"/>
<path d="M921.3 620.7 L930 622.8 L938.2 624.2 L945.8 625.1 L952.2 625.2 L957.1 624.5 L960.2 623.2 L961.5 621.3 L967.2 574.9" stroke="#8080c8" stroke-width="5" stroke-linecap="round" stroke-linejoin="round" fill="none" transform="translate(-0.3 -0.4)"/>
<path d="M921.3 620.7 L930 622.8 L938.2 624.2 L945.8 625.1 L952.2 625.2 L957.1 624.5 L960.2 623.2 L961.5 621.3 L967.2 574.9" stroke="#b4b4ee" stroke-width="2" stroke-linecap="round" stroke-linejoin="round" fill="none" transform="translate(-0.9 -0.8)"/>
<path d="M493.3 453.9 L494.3 496.2 L495.1 498.4 L497.4 500.9 L501.1 503.6 L506 506.4 L511.8 509 L518.3 511.4 L525.1 513.5 L921.3 620.7 L930 622.8 L938.2 624.2 L945.8 625.1 L952.2 625.2 L957.1 624.5 L960.2 623.2 L961.5 621.3 L967.2 574.9" stroke="#fff" stroke-opacity="0.5" stroke-width="7.1" stroke-dasharray="0.8 14.2" fill="none"/>
<path d="M452.9 482.2 L454.5 525.5 L455.4 527.8 L457.7 530.4 L461.5 533.2 L466.5 536 L472.4 538.8 L479.1 541.4 L486 543.6 L891.8 658.2 L900.6 660.5 L909.1 662.1 L916.8 663 L923.4 663.2 L928.4 662.7 L931.7 661.3 L932.9 659.4 L938.5 611.8" stroke="#5c5c7a" stroke-width="7.3" stroke-linecap="round" stroke-linejoin="round" fill="none"/>
<path d="M452.9 482.2 L454.5 525.5 L455.4 527.8 L457.7 530.4 L461.5 533.2 L466.5 536 L472.4 538.8 L479.1 541.4 L486 543.6 L891.8 658.2 L900.6 660.5 L909.1 662.1 L916.8 663 L923.4 663.2 L928.4 662.7 L931.7 661.3 L932.9 659.4 L938.5 611.8" stroke="#8686ae" stroke-width="5.3" stroke-linecap="round" stroke-linejoin="round" fill="none" transform="translate(-0.3 -0.5)"/>
<path d="M452.9 482.2 L454.5 525.5 L455.4 527.8 L457.7 530.4 L461.5 533.2 L466.5 536 L472.4 538.8 L479.1 541.4 L486 543.6 L891.8 658.2 L900.6 660.5 L909.1 662.1 L916.8 663 L923.4 663.2 L928.4 662.7 L931.7 661.3 L932.9 659.4 L938.5 611.8" stroke="#babade" stroke-width="2.2" stroke-linecap="round" stroke-linejoin="round" fill="none" transform="translate(-0.8 -1.1)"/>
<path d="M452.9 482.2 L454.5 525.5 L455.4 527.8 L457.7 530.4 L461.5 533.2 L466.5 536 L472.4 538.8 L479.1 541.4 L486 543.6" stroke="#5c5ca4" stroke-width="7.3" stroke-linecap="round" stroke-linejoin="round" fill="none"/>
<path d="M452.9 482.2 L454.5 525.5 L455.4 527.8 L457.7 530.4 L461.5 533.2 L466.5 536 L472.4 538.8 L479.1 541.4 L486 543.6" stroke="#8080c8" stroke-width="5.1" stroke-linecap="round" stroke-linejoin="round" fill="none" transform="translate(-0.3 -0.4)"/>
<path d="M452.9 482.2 L454.5 525.5 L455.4 527.8 L457.7 530.4 L461.5 533.2 L466.5 536 L472.4 538.8 L479.1 541.4 L486 543.6" stroke="#b4b4ee" stroke-width="2.1" stroke-linecap="round" stroke-linejoin="round" fill="none" transform="translate(-0.9 -0.8)"/>
<path d="M891.8 658.2 L900.6 660.5 L909.1 662.1 L916.8 663 L923.4 663.2 L928.4 662.7 L931.7 661.3 L932.9 659.4 L938.5 611.8" stroke="#5c5ca4" stroke-width="7.3" stroke-linecap="round" stroke-linejoin="round" fill="none"/>
<path d="M891.8 658.2 L900.6 660.5 L909.1 662.1 L916.8 663 L923.4 663.2 L928.4 662.7 L931.7 661.3 L932.9 659.4 L938.5 611.8" stroke="#8080c8" stroke-width="5.1" stroke-linecap="round" stroke-linejoin="round" fill="none" transform="translate(-0.3 -0.4)"/>
<path d="M891.8 658.2 L900.6 660.5 L909.1 662.1 L916.8 663 L923.4 663.2 L928.4 662.7 L931.7 661.3 L932.9 659.4 L938.5 611.8" stroke="#b4b4ee" stroke-width="2.1" stroke-linecap="round" stroke-linejoin="round" fill="none" transform="translate(-0.9 -0.8)"/>
<path d="M452.9 482.2 L454.5 525.5 L455.4 527.8 L457.7 530.4 L461.5 533.2 L466.5 536 L472.4 538.8 L479.1 541.4 L486 543.6 L891.8 658.2 L900.6 660.5 L909.1 662.1 L916.8 663 L923.4 663.2 L928.4 662.7 L931.7 661.3 L932.9 659.4 L938.5 611.8" stroke="#fff" stroke-opacity="0.5" stroke-width="7.3" stroke-dasharray="0.8 14.6" fill="none"/>
<path d="M409.8 512.4 L412.1 556.7 L413 559 L415.4 561.7 L419.3 564.6 L424.4 567.6 L430.5 570.5 L437.2 573.2 L444.4 575.6 L859.9 698.6 L869.1 701 L877.8 702.8 L885.7 703.9 L892.5 704.2 L897.6 703.6 L900.9 702.3 L902.2 700.3 L907.5 651.6" stroke="#5c5c7a" stroke-width="7.6" stroke-linecap="round" stroke-linejoin="round" fill="none"/>
<path d="M409.8 512.4 L412.1 556.7 L413 559 L415.4 561.7 L419.3 564.6 L424.4 567.6 L430.5 570.5 L437.2 573.2 L444.4 575.6 L859.9 698.6 L869.1 701 L877.8 702.8 L885.7 703.9 L892.5 704.2 L897.6 703.6 L900.9 702.3 L902.2 700.3 L907.5 651.6" stroke="#8686ae" stroke-width="5.5" stroke-linecap="round" stroke-linejoin="round" fill="none" transform="translate(-0.3 -0.5)"/>
<path d="M409.8 512.4 L412.1 556.7 L413 559 L415.4 561.7 L419.3 564.6 L424.4 567.6 L430.5 570.5 L437.2 573.2 L444.4 575.6 L859.9 698.6 L869.1 701 L877.8 702.8 L885.7 703.9 L892.5 704.2 L897.6 703.6 L900.9 702.3 L902.2 700.3 L907.5 651.6" stroke="#babade" stroke-width="2.3" stroke-linecap="round" stroke-linejoin="round" fill="none" transform="translate(-0.8 -1.1)"/>
<path d="M409.8 512.4 L412.1 556.7 L413 559 L415.4 561.7 L419.3 564.6 L424.4 567.6 L430.5 570.5 L437.2 573.2 L444.4 575.6" stroke="#5c5ca4" stroke-width="7.6" stroke-linecap="round" stroke-linejoin="round" fill="none"/>
<path d="M409.8 512.4 L412.1 556.7 L413 559 L415.4 561.7 L419.3 564.6 L424.4 567.6 L430.5 570.5 L437.2 573.2 L444.4 575.6" stroke="#8080c8" stroke-width="5.3" stroke-linecap="round" stroke-linejoin="round" fill="none" transform="translate(-0.3 -0.4)"/>
<path d="M409.8 512.4 L412.1 556.7 L413 559 L415.4 561.7 L419.3 564.6 L424.4 567.6 L430.5 570.5 L437.2 573.2 L444.4 575.6" stroke="#b4b4ee" stroke-width="2.1" stroke-linecap="round" stroke-linejoin="round" fill="none" transform="translate(-0.9 -0.8)"/>
<path d="M859.9 698.6 L869.1 701 L877.8 702.8 L885.7 703.9 L892.5 704.2 L897.6 703.6 L900.9 702.3 L902.2 700.3 L907.5 651.6" stroke="#5c5ca4" stroke-width="7.6" stroke-linecap="round" stroke-linejoin="round" fill="none"/>
<path d="M859.9 698.6 L869.1 701 L877.8 702.8 L885.7 703.9 L892.5 704.2 L897.6 703.6 L900.9 702.3 L902.2 700.3 L907.5 651.6" stroke="#8080c8" stroke-width="5.3" stroke-linecap="round" stroke-linejoin="round" fill="none" transform="translate(-0.3 -0.4)"/>
<path d="M859.9 698.6 L869.1 701 L877.8 702.8 L885.7 703.9 L892.5 704.2 L897.6 703.6 L900.9 702.3 L902.2 700.3 L907.5 651.6" stroke="#b4b4ee" stroke-width="2.1" stroke-linecap="round" stroke-linejoin="round" fill="none" transform="translate(-0.9 -0.8)"/>
<path d="M409.8 512.4 L412.1 556.7 L413 559 L415.4 561.7 L419.3 564.6 L424.4 567.6 L430.5 570.5 L437.2 573.2 L444.4 575.6 L859.9 698.6 L869.1 701 L877.8 702.8 L885.7 703.9 L892.5 704.2 L897.6 703.6 L900.9 702.3 L902.2 700.3 L907.5 651.6" stroke="#fff" stroke-opacity="0.5" stroke-width="7.6" stroke-dasharray="0.8 15.2" fill="none"/>
<path d="M363.7 544.7 L366.8 590 L367.7 592.5 L370.2 595.2 L374.2 598.3 L379.4 601.4 L385.6 604.5 L392.6 607.3 L399.8 609.8 L825.7 742 L835.1 744.7 L844.1 746.7 L852.2 747.9 L859.1 748.3 L864.4 747.9 L867.8 746.6 L869.1 744.5 L874 694.6" stroke="#5c5c7a" stroke-width="7.9" stroke-linecap="round" stroke-linejoin="round" fill="none"/>
<path d="M363.7 544.7 L366.8 590 L367.7 592.5 L370.2 595.2 L374.2 598.3 L379.4 601.4 L385.6 604.5 L392.6 607.3 L399.8 609.8 L825.7 742 L835.1 744.7 L844.1 746.7 L852.2 747.9 L859.1 748.3 L864.4 747.9 L867.8 746.6 L869.1 744.5 L874 694.6" stroke="#8686ae" stroke-width="5.7" stroke-linecap="round" stroke-linejoin="round" fill="none" transform="translate(-0.3 -0.5)"/>
<path d="M363.7 544.7 L366.8 590 L367.7 592.5 L370.2 595.2 L374.2 598.3 L379.4 601.4 L385.6 604.5 L392.6 607.3 L399.8 609.8 L825.7 742 L835.1 744.7 L844.1 746.7 L852.2 747.9 L859.1 748.3 L864.4 747.9 L867.8 746.6 L869.1 744.5 L874 694.6" stroke="#babade" stroke-width="2.4" stroke-linecap="round" stroke-linejoin="round" fill="none" transform="translate(-0.8 -1.1)"/>
<path d="M363.7 544.7 L366.8 590 L367.7 592.5 L370.2 595.2 L374.2 598.3 L379.4 601.4 L385.6 604.5 L392.6 607.3 L399.8 609.8" stroke="#5c5ca4" stroke-width="7.9" stroke-linecap="round" stroke-linejoin="round" fill="none"/>
<path d="M363.7 544.7 L366.8 590 L367.7 592.5 L370.2 595.2 L374.2 598.3 L379.4 601.4 L385.6 604.5 L392.6 607.3 L399.8 609.8" stroke="#8080c8" stroke-width="5.5" stroke-linecap="round" stroke-linejoin="round" fill="none" transform="translate(-0.3 -0.4)"/>
<path d="M363.7 544.7 L366.8 590 L367.7 592.5 L370.2 595.2 L374.2 598.3 L379.4 601.4 L385.6 604.5 L392.6 607.3 L399.8 609.8" stroke="#b4b4ee" stroke-width="2.2" stroke-linecap="round" stroke-linejoin="round" fill="none" transform="translate(-0.9 -0.8)"/>
<path d="M825.7 742 L835.1 744.7 L844.1 746.7 L852.2 747.9 L859.1 748.3 L864.4 747.9 L867.8 746.6 L869.1 744.5 L874 694.6" stroke="#5c5ca4" stroke-width="7.9" stroke-linecap="round" stroke-linejoin="round" fill="none"/>
<path d="M825.7 742 L835.1 744.7 L844.1 746.7 L852.2 747.9 L859.1 748.3 L864.4 747.9 L867.8 746.6 L869.1 744.5 L874 694.6" stroke="#8080c8" stroke-width="5.5" stroke-linecap="round" stroke-linejoin="round" fill="none" transform="translate(-0.3 -0.4)"/>
<path d="M825.7 742 L835.1 744.7 L844.1 746.7 L852.2 747.9 L859.1 748.3 L864.4 747.9 L867.8 746.6 L869.1 744.5 L874 694.6" stroke="#b4b4ee" stroke-width="2.2" stroke-linecap="round" stroke-linejoin="round" fill="none" transform="translate(-0.9 -0.8)"/>
<path d="M363.7 544.7 L366.8 590 L367.7 592.5 L370.2 595.2 L374.2 598.3 L379.4 601.4 L385.6 604.5 L392.6 607.3 L399.8 609.8 L825.7 742 L835.1 744.7 L844.1 746.7 L852.2 747.9 L859.1 748.3 L864.4 747.9 L867.8 746.6 L869.1 744.5 L874 694.6" stroke="#fff" stroke-opacity="0.5" stroke-width="7.9" stroke-dasharray="0.8 15.7" fill="none"/>
<path d="M314.4 579.3 L318.2 625.7 L319.2 628.2 L321.9 631.1 L325.9 634.3 L331.3 637.5 L337.6 640.8 L344.7 643.8 L352.2 646.5 L788.7 789 L798.3 791.9 L807.6 794.1 L816 795.5 L823.1 796 L828.5 795.7 L832 794.4 L833.3 792.3 L837.8 741.2" stroke="#5c5c7a" stroke-width="8.2" stroke-linecap="round" stroke-linejoin="round" fill="none"/>
<path d="M314.4 579.3 L318.2 625.7 L319.2 628.2 L321.9 631.1 L325.9 634.3 L331.3 637.5 L337.6 640.8 L344.7 643.8 L352.2 646.5 L788.7 789 L798.3 791.9 L807.6 794.1 L816 795.5 L823.1 796 L828.5 795.7 L832 794.4 L833.3 792.3 L837.8 741.2" stroke="#8686ae" stroke-width="5.9" stroke-linecap="round" stroke-linejoin="round" fill="none" transform="translate(-0.3 -0.5)"/>
<path d="M314.4 579.3 L318.2 625.7 L319.2 628.2 L321.9 631.1 L325.9 634.3 L331.3 637.5 L337.6 640.8 L344.7 643.8 L352.2 646.5 L788.7 789 L798.3 791.9 L807.6 794.1 L816 795.5 L823.1 796 L828.5 795.7 L832 794.4 L833.3 792.3 L837.8 741.2" stroke="#babade" stroke-width="2.4" stroke-linecap="round" stroke-linejoin="round" fill="none" transform="translate(-0.8 -1.1)"/>
<path d="M314.4 579.3 L318.2 625.7 L319.2 628.2 L321.9 631.1 L325.9 634.3 L331.3 637.5 L337.6 640.8 L344.7 643.8 L352.2 646.5" stroke="#5c5ca4" stroke-width="8.2" stroke-linecap="round" stroke-linejoin="round" fill="none"/>
<path d="M314.4 579.3 L318.2 625.7 L319.2 628.2 L321.9 631.1 L325.9 634.3 L331.3 637.5 L337.6 640.8 L344.7 643.8 L352.2 646.5" stroke="#8080c8" stroke-width="5.7" stroke-linecap="round" stroke-linejoin="round" fill="none" transform="translate(-0.3 -0.4)"/>
<path d="M314.4 579.3 L318.2 625.7 L319.2 628.2 L321.9 631.1 L325.9 634.3 L331.3 637.5 L337.6 640.8 L344.7 643.8 L352.2 646.5" stroke="#b4b4ee" stroke-width="2.3" stroke-linecap="round" stroke-linejoin="round" fill="none" transform="translate(-0.9 -0.8)"/>
<path d="M788.7 789 L798.3 791.9 L807.6 794.1 L816 795.5 L823.1 796 L828.5 795.7 L832 794.4 L833.3 792.3 L837.8 741.2" stroke="#5c5ca4" stroke-width="8.2" stroke-linecap="round" stroke-linejoin="round" fill="none"/>
<path d="M788.7 789 L798.3 791.9 L807.6 794.1 L816 795.5 L823.1 796 L828.5 795.7 L832 794.4 L833.3 792.3 L837.8 741.2" stroke="#8080c8" stroke-width="5.7" stroke-linecap="round" stroke-linejoin="round" fill="none" transform="translate(-0.3 -0.4)"/>
<path d="M788.7 789 L798.3 791.9 L807.6 794.1 L816 795.5 L823.1 796 L828.5 795.7 L832 794.4 L833.3 792.3 L837.8 741.2" stroke="#b4b4ee" stroke-width="2.3" stroke-linecap="round" stroke-linejoin="round" fill="none" transform="translate(-0.9 -0.8)"/>
<path d="M314.4 579.3 L318.2 625.7 L319.2 628.2 L321.9 631.1 L325.9 634.3 L331.3 637.5 L337.6 640.8 L344.7 643.8 L352.2 646.5 L788.7 789 L798.3 791.9 L807.6 794.1 L816 795.5 L823.1 796 L828.5 795.7 L832 794.4 L833.3 792.3 L837.8 741.2" stroke="#fff" stroke-opacity="0.5" stroke-width="8.2" stroke-dasharray="0.8 16.3" fill="none"/>
<path d="M261.4 616.5 L266.2 664 L267.3 666.6 L269.9 669.6 L274.1 672.9 L279.6 676.3 L286.1 679.7 L293.4 683 L301 685.8 L748.5 839.9 L758.5 843.1 L768 845.5 L776.6 847.1 L783.9 847.8 L789.5 847.5 L793.1 846.3 L794.4 844.2 L798.4 791.8" stroke="#5c5c7a" stroke-width="8.5" stroke-linecap="round" stroke-linejoin="round" fill="none"/>
<path d="M261.4 616.5 L266.2 664 L267.3 666.6 L269.9 669.6 L274.1 672.9 L279.6 676.3 L286.1 679.7 L293.4 683 L301 685.8 L748.5 839.9 L758.5 843.1 L768 845.5 L776.6 847.1 L783.9 847.8 L789.5 847.5 L793.1 846.3 L794.4 844.2 L798.4 791.8" stroke="#8686ae" stroke-width="6.1" stroke-linecap="round" stroke-linejoin="round" fill="none" transform="translate(-0.3 -0.5)"/>
<path d="M261.4 616.5 L266.2 664 L267.3 666.6 L269.9 669.6 L274.1 672.9 L279.6 676.3 L286.1 679.7 L293.4 683 L301 685.8 L748.5 839.9 L758.5 843.1 L768 845.5 L776.6 847.1 L783.9 847.8 L789.5 847.5 L793.1 846.3 L794.4 844.2 L798.4 791.8" stroke="#babade" stroke-width="2.5" stroke-linecap="round" stroke-linejoin="round" fill="none" transform="translate(-0.8 -1.1)"/>
<path d="M261.4 616.5 L266.2 664 L267.3 666.6 L269.9 669.6 L274.1 672.9 L279.6 676.3 L286.1 679.7 L293.4 683 L301 685.8" stroke="#5c5ca4" stroke-width="8.5" stroke-linecap="round" stroke-linejoin="round" fill="none"/>
<path d="M261.4 616.5 L266.2 664 L267.3 666.6 L269.9 669.6 L274.1 672.9 L279.6 676.3 L286.1 679.7 L293.4 683 L301 685.8" stroke="#8080c8" stroke-width="5.9" stroke-linecap="round" stroke-linejoin="round" fill="none" transform="translate(-0.3 -0.4)"/>
<path d="M261.4 616.5 L266.2 664 L267.3 666.6 L269.9 669.6 L274.1 672.9 L279.6 676.3 L286.1 679.7 L293.4 683 L301 685.8" stroke="#b4b4ee" stroke-width="2.4" stroke-linecap="round" stroke-linejoin="round" fill="none" transform="translate(-0.9 -0.8)"/>
<path d="M748.5 839.9 L758.5 843.1 L768 845.5 L776.6 847.1 L783.9 847.8 L789.5 847.5 L793.1 846.3 L794.4 844.2 L798.4 791.8" stroke="#5c5ca4" stroke-width="8.5" stroke-linecap="round" stroke-linejoin="round" fill="none"/>
<path d="M748.5 839.9 L758.5 843.1 L768 845.5 L776.6 847.1 L783.9 847.8 L789.5 847.5 L793.1 846.3 L794.4 844.2 L798.4 791.8" stroke="#8080c8" stroke-width="5.9" stroke-linecap="round" stroke-linejoin="round" fill="none" transform="translate(-0.3 -0.4)"/>
<path d="M748.5 839.9 L758.5 843.1 L768 845.5 L776.6 847.1 L783.9 847.8 L789.5 847.5 L793.1 846.3 L794.4 844.2 L798.4 791.8" stroke="#b4b4ee" stroke-width="2.4" stroke-linecap="round" stroke-linejoin="round" fill="none" transform="translate(-0.9 -0.8)"/>
<path d="M261.4 616.5 L266.2 664 L267.3 666.6 L269.9 669.6 L274.1 672.9 L279.6 676.3 L286.1 679.7 L293.4 683 L301 685.8 L748.5 839.9 L758.5 843.1 L768 845.5 L776.6 847.1 L783.9 847.8 L789.5 847.5 L793.1 846.3 L794.4 844.2 L798.4 791.8" stroke="#fff" stroke-opacity="0.5" stroke-width="8.5" stroke-dasharray="0.8 17" fill="none"/>
<path d="M204.3 656.5 L210.2 705.2 L211.3 707.9 L214.1 711 L218.4 714.4 L224 718.1 L230.7 721.7 L238.1 725.1 L245.9 728.2 L704.9 895.3 L715.1 898.7 L724.9 901.4 L733.8 903.3 L741.3 904.2 L747.1 904 L750.7 902.9 L752 900.7 L755.4 847" stroke="#5c5c7a" stroke-width="8.8" stroke-linecap="round" stroke-linejoin="round" fill="none"/>
<path d="M204.3 656.5 L210.2 705.2 L211.3 707.9 L214.1 711 L218.4 714.4 L224 718.1 L230.7 721.7 L238.1 725.1 L245.9 728.2 L704.9 895.3 L715.1 898.7 L724.9 901.4 L733.8 903.3 L741.3 904.2 L747.1 904 L750.7 902.9 L752 900.7 L755.4 847" stroke="#8686ae" stroke-width="6.4" stroke-linecap="round" stroke-linejoin="round" fill="none" transform="translate(-0.3 -0.5)"/>
<path d="M204.3 656.5 L210.2 705.2 L211.3 707.9 L214.1 711 L218.4 714.4 L224 718.1 L230.7 721.7 L238.1 725.1 L245.9 728.2 L704.9 895.3 L715.1 898.7 L724.9 901.4 L733.8 903.3 L741.3 904.2 L747.1 904 L750.7 902.9 L752 900.7 L755.4 847" stroke="#babade" stroke-width="2.6" stroke-linecap="round" stroke-linejoin="round" fill="none" transform="translate(-0.8 -1.1)"/>
<path d="M204.3 656.5 L210.2 705.2 L211.3 707.9 L214.1 711 L218.4 714.4 L224 718.1 L230.7 721.7 L238.1 725.1 L245.9 728.2" stroke="#5c5ca4" stroke-width="8.8" stroke-linecap="round" stroke-linejoin="round" fill="none"/>
<path d="M204.3 656.5 L210.2 705.2 L211.3 707.9 L214.1 711 L218.4 714.4 L224 718.1 L230.7 721.7 L238.1 725.1 L245.9 728.2" stroke="#8080c8" stroke-width="6.2" stroke-linecap="round" stroke-linejoin="round" fill="none" transform="translate(-0.3 -0.4)"/>
<path d="M204.3 656.5 L210.2 705.2 L211.3 707.9 L214.1 711 L218.4 714.4 L224 718.1 L230.7 721.7 L238.1 725.1 L245.9 728.2" stroke="#b4b4ee" stroke-width="2.5" stroke-linecap="round" stroke-linejoin="round" fill="none" transform="translate(-0.9 -0.8)"/>
<path d="M704.9 895.3 L715.1 898.7 L724.9 901.4 L733.8 903.3 L741.3 904.2 L747.1 904 L750.7 902.9 L752 900.7 L755.4 847" stroke="#5c5ca4" stroke-width="8.8" stroke-linecap="round" stroke-linejoin="round" fill="none"/>
<path d="M704.9 895.3 L715.1 898.7 L724.9 901.4 L733.8 903.3 L741.3 904.2 L747.1 904 L750.7 902.9 L752 900.7 L755.4 847" stroke="#8080c8" stroke-width="6.2" stroke-linecap="round" stroke-linejoin="round" fill="none" transform="translate(-0.3 -0.4)"/>
<path d="M704.9 895.3 L715.1 898.7 L724.9 901.4 L733.8 903.3 L741.3 904.2 L747.1 904 L750.7 902.9 L752 900.7 L755.4 847" stroke="#b4b4ee" stroke-width="2.5" stroke-linecap="round" stroke-linejoin="round" fill="none" transform="translate(-0.9 -0.8)"/>
<path d="M204.3 656.5 L210.2 705.2 L211.3 707.9 L214.1 711 L218.4 714.4 L224 718.1 L230.7 721.7 L238.1 725.1 L245.9 728.2 L704.9 895.3 L715.1 898.7 L724.9 901.4 L733.8 903.3 L741.3 904.2 L747.1 904 L750.7 902.9 L752 900.7 L755.4 847" stroke="#fff" stroke-opacity="0.5" stroke-width="8.8" stroke-dasharray="0.8 17.6" fill="none"/>
<path d="M595.9 599.7 L598.2 225.6" stroke="#565670" stroke-width="8.7" stroke-linecap="round" stroke-linejoin="round" fill="none"/>
<path d="M595.9 599.7 L598.2 225.6" stroke="#7a7a9c" stroke-width="6.3" stroke-linecap="round" stroke-linejoin="round" fill="none" transform="translate(-0.3 -0.5)"/>
<path d="M595.9 599.7 L598.2 225.6" stroke="#a6a6c4" stroke-width="2.6" stroke-linecap="round" stroke-linejoin="round" fill="none" transform="translate(-0.8 -1.1)"/>
<path d="M595.9 599.7 L598.2 225.6" stroke="#fff" stroke-opacity="0.5" stroke-width="8.7" stroke-dasharray="0.8 17.4" fill="none"/>
<path d="M636.5 611.5 L643.7 233.9" stroke="#565670" stroke-width="8.8" stroke-linecap="round" stroke-linejoin="round" fill="none"/>
<path d="M636.5 611.5 L643.7 233.9" stroke="#7a7a9c" stroke-width="6.3" stroke-linecap="round" stroke-linejoin="round" fill="none" transform="translate(-0.3 -0.5)"/>
<path d="M636.5 611.5 L643.7 233.9" stroke="#a6a6c4" stroke-width="2.6" stroke-linecap="round" stroke-linejoin="round" fill="none" transform="translate(-0.8 -1.1)"/>
<path d="M636.5 611.5 L643.7 233.9" stroke="#fff" stroke-opacity="0.5" stroke-width="8.8" stroke-dasharray="0.8 17.6" fill="none"/>
<path d="M572.8 620.4 L572.3 240.3" stroke="#565670" stroke-width="8.9" stroke-linecap="round" stroke-linejoin="round" fill="none"/>
<path d="M572.8 620.4 L572.3 240.3" stroke="#7a7a9c" stroke-width="6.4" stroke-linecap="round" stroke-linejoin="round" fill="none" transform="translate(-0.3 -0.5)"/>
<path d="M572.8 620.4 L572.3 240.3" stroke="#a6a6c4" stroke-width="2.7" stroke-linecap="round" stroke-linejoin="round" fill="none" transform="translate(-0.8 -1.1)"/>
<path d="M572.8 620.4 L572.3 240.3" stroke="#fff" stroke-opacity="0.5" stroke-width="8.9" stroke-dasharray="0.8 17.8" fill="none"/>
<path d="M565.9 495.5 L711.4 533.6" stroke="#54546c" stroke-width="5.4" stroke-linecap="round" stroke-linejoin="round" fill="none"/>
<path d="M565.9 495.5 L711.4 533.6" stroke="#72728e" stroke-width="3.9" stroke-linecap="round" stroke-linejoin="round" fill="none" transform="translate(-0.3 -0.5)"/>
<path d="M565.9 495.5 L711.4 533.6" stroke="#9a9ab6" stroke-width="1.6" stroke-linecap="round" stroke-linejoin="round" fill="none" transform="translate(-0.8 -1.1)"/>
<path d="M565.9 495.5 L711.4 533.6" stroke="#fff" stroke-opacity="0.5" stroke-width="5.4" stroke-dasharray="0.8 10.8" fill="none"/>
<path d="M678 623.5 L690.4 242.4" stroke="#565670" stroke-width="8.9" stroke-linecap="round" stroke-linejoin="round" fill="none"/>
<path d="M678 623.5 L690.4 242.4" stroke="#7a7a9c" stroke-width="6.4" stroke-linecap="round" stroke-linejoin="round" fill="none" transform="translate(-0.3 -0.5)"/>
<path d="M678 623.5 L690.4 242.4" stroke="#a6a6c4" stroke-width="2.7" stroke-linecap="round" stroke-linejoin="round" fill="none" transform="translate(-0.8 -1.1)"/>
<path d="M678 623.5 L690.4 242.4" stroke="#fff" stroke-opacity="0.5" stroke-width="8.9" stroke-dasharray="0.8 17.8" fill="none"/>
<path d="M561.1 550.7 L642.5 483.7" stroke="#54546c" stroke-width="5.4" stroke-linecap="round" stroke-linejoin="round" fill="none"/>
<path d="M561.1 550.7 L642.5 483.7" stroke="#72728e" stroke-width="3.9" stroke-linecap="round" stroke-linejoin="round" fill="none" transform="translate(-0.3 -0.5)"/>
<path d="M561.1 550.7 L642.5 483.7" stroke="#9a9ab6" stroke-width="1.6" stroke-linecap="round" stroke-linejoin="round" fill="none" transform="translate(-0.8 -1.1)"/>
<path d="M561.1 550.7 L642.5 483.7" stroke="#fff" stroke-opacity="0.5" stroke-width="5.4" stroke-dasharray="0.8 10.9" fill="none"/>
<path d="M720.5 635.8 L738.4 251.1" stroke="#565670" stroke-width="9" stroke-linecap="round" stroke-linejoin="round" fill="none"/>
<path d="M720.5 635.8 L738.4 251.1" stroke="#7a7a9c" stroke-width="6.5" stroke-linecap="round" stroke-linejoin="round" fill="none" transform="translate(-0.3 -0.5)"/>
<path d="M720.5 635.8 L738.4 251.1" stroke="#a6a6c4" stroke-width="2.7" stroke-linecap="round" stroke-linejoin="round" fill="none" transform="translate(-0.8 -1.1)"/>
<path d="M720.5 635.8 L738.4 251.1" stroke="#fff" stroke-opacity="0.5" stroke-width="9" stroke-dasharray="0.8 18" fill="none"/>
<path d="M510 533.1 L660.5 574.8 L737.1 504.2 L593.8 468.1 L510 533.1" stroke="#6262a0" stroke-width="5.8" stroke-linecap="round" stroke-linejoin="round" fill="none"/>
<path d="M510 533.1 L660.5 574.8 L737.1 504.2 L593.8 468.1 L510 533.1" stroke="#8686c8" stroke-width="4.2" stroke-linecap="round" stroke-linejoin="round" fill="none" transform="translate(-0.3 -0.5)"/>
<path d="M510 533.1 L660.5 574.8 L737.1 504.2 L593.8 468.1 L510 533.1" stroke="#bcbcf2" stroke-width="1.7" stroke-linecap="round" stroke-linejoin="round" fill="none" transform="translate(-0.8 -1.1)"/>
<path d="M510 533.1 L660.5 574.8 L737.1 504.2 L593.8 468.1 L510 533.1" stroke="#fff" stroke-opacity="0.5" stroke-width="5.8" stroke-dasharray="0.8 11.6" fill="none"/>
<path d="M565.7 439.5 L713.8 475.9" stroke="#54546c" stroke-width="5.5" stroke-linecap="round" stroke-linejoin="round" fill="none"/>
<path d="M565.7 439.5 L713.8 475.9" stroke="#72728e" stroke-width="4" stroke-linecap="round" stroke-linejoin="round" fill="none" transform="translate(-0.3 -0.5)"/>
<path d="M565.7 439.5 L713.8 475.9" stroke="#9a9ab6" stroke-width="1.6" stroke-linecap="round" stroke-linejoin="round" fill="none" transform="translate(-0.8 -1.1)"/>
<path d="M565.7 439.5 L713.8 475.9" stroke="#fff" stroke-opacity="0.5" stroke-width="5.5" stroke-dasharray="0.8 11" fill="none"/>
<path d="M606.4 563.3 L685.6 494.6" stroke="#54546c" stroke-width="5.5" stroke-linecap="round" stroke-linejoin="round" fill="none"/>
<path d="M606.4 563.3 L685.6 494.6" stroke="#72728e" stroke-width="4" stroke-linecap="round" stroke-linejoin="round" fill="none" transform="translate(-0.3 -0.5)"/>
<path d="M606.4 563.3 L685.6 494.6" stroke="#9a9ab6" stroke-width="1.6" stroke-linecap="round" stroke-linejoin="round" fill="none" transform="translate(-0.8 -1.1)"/>
<path d="M606.4 563.3 L685.6 494.6" stroke="#fff" stroke-opacity="0.5" stroke-width="5.5" stroke-dasharray="0.8 11" fill="none"/>
<path d="M548.6 641.8 L545.2 255.7" stroke="#565670" stroke-width="9.1" stroke-linecap="round" stroke-linejoin="round" fill="none"/>
<path d="M548.6 641.8 L545.2 255.7" stroke="#7a7a9c" stroke-width="6.5" stroke-linecap="round" stroke-linejoin="round" fill="none" transform="translate(-0.3 -0.5)"/>
<path d="M548.6 641.8 L545.2 255.7" stroke="#a6a6c4" stroke-width="2.7" stroke-linecap="round" stroke-linejoin="round" fill="none" transform="translate(-0.8 -1.1)"/>
<path d="M548.6 641.8 L545.2 255.7" stroke="#fff" stroke-opacity="0.5" stroke-width="9.1" stroke-dasharray="0.8 18.1" fill="none"/>
<path d="M540.7 515.2 L688.4 555" stroke="#54546c" stroke-width="5.5" stroke-linecap="round" stroke-linejoin="round" fill="none"/>
<path d="M540.7 515.2 L688.4 555" stroke="#72728e" stroke-width="4" stroke-linecap="round" stroke-linejoin="round" fill="none" transform="translate(-0.3 -0.5)"/>
<path d="M540.7 515.2 L688.4 555" stroke="#9a9ab6" stroke-width="1.7" stroke-linecap="round" stroke-linejoin="round" fill="none" transform="translate(-0.8 -1.1)"/>
<path d="M540.7 515.2 L688.4 555" stroke="#fff" stroke-opacity="0.5" stroke-width="5.5" stroke-dasharray="0.8 11" fill="none"/>
<path d="M560.8 492 L643.6 428" stroke="#54546c" stroke-width="5.5" stroke-linecap="round" stroke-linejoin="round" fill="none"/>
<path d="M560.8 492 L643.6 428" stroke="#72728e" stroke-width="4" stroke-linecap="round" stroke-linejoin="round" fill="none" transform="translate(-0.3 -0.5)"/>
<path d="M560.8 492 L643.6 428" stroke="#9a9ab6" stroke-width="1.7" stroke-linecap="round" stroke-linejoin="round" fill="none" transform="translate(-0.8 -1.1)"/>
<path d="M560.8 492 L643.6 428" stroke="#fff" stroke-opacity="0.5" stroke-width="5.5" stroke-dasharray="0.8 11" fill="none"/>
<path d="M604.8 361.6 L605.9 223" stroke="url(#ag1)" stroke-width="12.7" stroke-linecap="butt" fill="none"/>
<path d="M604.8 361.6 L605.9 223" stroke="#fff" stroke-opacity="0.18" stroke-width="4.4" fill="none" transform="translate(-1.2 0)"/>
<ellipse cx="605.9" cy="223" rx="6.4" ry="2.5" fill="#3a3ae8"/>
<path d="M508.8 474.9 L662.1 514.9 L740 447.3 L594.1 412.9 L508.8 474.9" stroke="#6262a0" stroke-width="5.9" stroke-linecap="round" stroke-linejoin="round" fill="none"/>
<path d="M508.8 474.9 L662.1 514.9 L740 447.3 L594.1 412.9 L508.8 474.9" stroke="#8686c8" stroke-width="4.3" stroke-linecap="round" stroke-linejoin="round" fill="none" transform="translate(-0.3 -0.5)"/>
<path d="M508.8 474.9 L662.1 514.9 L740 447.3 L594.1 412.9 L508.8 474.9" stroke="#bcbcf2" stroke-width="1.8" stroke-linecap="round" stroke-linejoin="round" fill="none" transform="translate(-0.8 -1.1)"/>
<path d="M508.8 474.9 L662.1 514.9 L740 447.3 L594.1 412.9 L508.8 474.9" stroke="#fff" stroke-opacity="0.5" stroke-width="5.9" stroke-dasharray="0.8 11.8" fill="none"/>
<path d="M565.5 381.9 L716.3 416.4" stroke="#54546c" stroke-width="5.6" stroke-linecap="round" stroke-linejoin="round" fill="none"/>
<path d="M565.5 381.9 L716.3 416.4" stroke="#72728e" stroke-width="4" stroke-linecap="round" stroke-linejoin="round" fill="none" transform="translate(-0.3 -0.5)"/>
<path d="M565.5 381.9 L716.3 416.4" stroke="#9a9ab6" stroke-width="1.7" stroke-linecap="round" stroke-linejoin="round" fill="none" transform="translate(-0.8 -1.1)"/>
<path d="M565.5 381.9 L716.3 416.4" stroke="#fff" stroke-opacity="0.5" stroke-width="5.6" stroke-dasharray="0.8 11.2" fill="none"/>
<path d="M607 504.1 L687.5 438.4" stroke="#54546c" stroke-width="5.6" stroke-linecap="round" stroke-linejoin="round" fill="none"/>
<path d="M607 504.1 L687.5 438.4" stroke="#72728e" stroke-width="4" stroke-linecap="round" stroke-linejoin="round" fill="none" transform="translate(-0.3 -0.5)"/>
<path d="M607 504.1 L687.5 438.4" stroke="#9a9ab6" stroke-width="1.7" stroke-linecap="round" stroke-linejoin="round" fill="none" transform="translate(-0.8 -1.1)"/>
<path d="M607 504.1 L687.5 438.4" stroke="#fff" stroke-opacity="0.5" stroke-width="5.6" stroke-dasharray="0.8 11.2" fill="none"/>
<path d="M699.1 658 L714.7 267" stroke="#565670" stroke-width="9.2" stroke-linecap="round" stroke-linejoin="round" fill="none"/>
<path d="M699.1 658 L714.7 267" stroke="#7a7a9c" stroke-width="6.6" stroke-linecap="round" stroke-linejoin="round" fill="none" transform="translate(-0.3 -0.5)"/>
<path d="M699.1 658 L714.7 267" stroke="#a6a6c4" stroke-width="2.8" stroke-linecap="round" stroke-linejoin="round" fill="none" transform="translate(-0.8 -1.1)"/>
<path d="M699.1 658 L714.7 267" stroke="#fff" stroke-opacity="0.5" stroke-width="9.2" stroke-dasharray="0.8 18.4" fill="none"/>
<path d="M540.1 458.3 L690.4 496.3" stroke="#54546c" stroke-width="5.6" stroke-linecap="round" stroke-linejoin="round" fill="none"/>
<path d="M540.1 458.3 L690.4 496.3" stroke="#72728e" stroke-width="4" stroke-linecap="round" stroke-linejoin="round" fill="none" transform="translate(-0.3 -0.5)"/>
<path d="M540.1 458.3 L690.4 496.3" stroke="#9a9ab6" stroke-width="1.7" stroke-linecap="round" stroke-linejoin="round" fill="none" transform="translate(-0.8 -1.1)"/>
<path d="M540.1 458.3 L690.4 496.3" stroke="#fff" stroke-opacity="0.5" stroke-width="5.6" stroke-dasharray="0.8 11.2" fill="none"/>
<path d="M560.5 431.6 L644.8 370.7" stroke="#54546c" stroke-width="5.6" stroke-linecap="round" stroke-linejoin="round" fill="none"/>
<path d="M560.5 431.6 L644.8 370.7" stroke="#72728e" stroke-width="4" stroke-linecap="round" stroke-linejoin="round" fill="none" transform="translate(-0.3 -0.5)"/>
<path d="M560.5 431.6 L644.8 370.7" stroke="#9a9ab6" stroke-width="1.7" stroke-linecap="round" stroke-linejoin="round" fill="none" transform="translate(-0.8 -1.1)"/>
<path d="M560.5 431.6 L644.8 370.7" stroke="#fff" stroke-opacity="0.5" stroke-width="5.6" stroke-dasharray="0.8 11.2" fill="none"/>
<path d="M523.5 664.2 L516.7 271.8" stroke="#565670" stroke-width="9.3" stroke-linecap="round" stroke-linejoin="round" fill="none"/>
<path d="M523.5 664.2 L516.7 271.8" stroke="#7a7a9c" stroke-width="6.7" stroke-linecap="round" stroke-linejoin="round" fill="none" transform="translate(-0.3 -0.5)"/>
<path d="M523.5 664.2 L516.7 271.8" stroke="#a6a6c4" stroke-width="2.8" stroke-linecap="round" stroke-linejoin="round" fill="none" transform="translate(-0.8 -1.1)"/>
<path d="M523.5 664.2 L516.7 271.8" stroke="#fff" stroke-opacity="0.5" stroke-width="9.3" stroke-dasharray="0.8 18.5" fill="none"/>
<path d="M507.6 415 L663.8 452.9 L742.9 388.7 L594.4 356.2 L507.6 415" stroke="#6262a0" stroke-width="6" stroke-linecap="round" stroke-linejoin="round" fill="none"/>
<path d="M507.6 415 L663.8 452.9 L742.9 388.7 L594.4 356.2 L507.6 415" stroke="#8686c8" stroke-width="4.3" stroke-linecap="round" stroke-linejoin="round" fill="none" transform="translate(-0.3 -0.5)"/>
<path d="M507.6 415 L663.8 452.9 L742.9 388.7 L594.4 356.2 L507.6 415" stroke="#bcbcf2" stroke-width="1.8" stroke-linecap="round" stroke-linejoin="round" fill="none" transform="translate(-0.8 -1.1)"/>
<path d="M507.6 415 L663.8 452.9 L742.9 388.7 L594.4 356.2 L507.6 415" stroke="#fff" stroke-opacity="0.5" stroke-width="6" stroke-dasharray="0.8 12" fill="none"/>
<path d="M565.3 322.4 L718.9 354.9" stroke="#54546c" stroke-width="5.7" stroke-linecap="round" stroke-linejoin="round" fill="none"/>
<path d="M565.3 322.4 L718.9 354.9" stroke="#72728e" stroke-width="4.1" stroke-linecap="round" stroke-linejoin="round" fill="none" transform="translate(-0.3 -0.5)"/>
<path d="M565.3 322.4 L718.9 354.9" stroke="#9a9ab6" stroke-width="1.7" stroke-linecap="round" stroke-linejoin="round" fill="none" transform="translate(-0.8 -1.1)"/>
<path d="M565.3 322.4 L718.9 354.9" stroke="#fff" stroke-opacity="0.5" stroke-width="5.7" stroke-dasharray="0.8 11.4" fill="none"/>
<path d="M607.5 443 L689.5 380.6" stroke="#54546c" stroke-width="5.7" stroke-linecap="round" stroke-linejoin="round" fill="none"/>
<path d="M607.5 443 L689.5 380.6" stroke="#72728e" stroke-width="4.1" stroke-linecap="round" stroke-linejoin="round" fill="none" transform="translate(-0.3 -0.5)"/>
<path d="M607.5 443 L689.5 380.6" stroke="#9a9ab6" stroke-width="1.7" stroke-linecap="round" stroke-linejoin="round" fill="none" transform="translate(-0.8 -1.1)"/>
<path d="M607.5 443 L689.5 380.6" stroke="#fff" stroke-opacity="0.5" stroke-width="5.7" stroke-dasharray="0.8 11.4" fill="none"/>
<path d="M565.8 677.5 L564.4 281.3" stroke="#565670" stroke-width="9.4" stroke-linecap="round" stroke-linejoin="round" fill="none"/>
<path d="M565.8 677.5 L564.4 281.3" stroke="#7a7a9c" stroke-width="6.8" stroke-linecap="round" stroke-linejoin="round" fill="none" transform="translate(-0.3 -0.5)"/>
<path d="M565.8 677.5 L564.4 281.3" stroke="#a6a6c4" stroke-width="2.8" stroke-linecap="round" stroke-linejoin="round" fill="none" transform="translate(-0.8 -1.1)"/>
<path d="M565.8 677.5 L564.4 281.3" stroke="#fff" stroke-opacity="0.5" stroke-width="9.4" stroke-dasharray="0.8 18.8" fill="none"/>
<path d="M539.4 399.7 L692.6 435.9" stroke="#54546c" stroke-width="5.7" stroke-linecap="round" stroke-linejoin="round" fill="none"/>
<path d="M539.4 399.7 L692.6 435.9" stroke="#72728e" stroke-width="4.1" stroke-linecap="round" stroke-linejoin="round" fill="none" transform="translate(-0.3 -0.5)"/>
<path d="M539.4 399.7 L692.6 435.9" stroke="#9a9ab6" stroke-width="1.7" stroke-linecap="round" stroke-linejoin="round" fill="none" transform="translate(-0.8 -1.1)"/>
<path d="M539.4 399.7 L692.6 435.9" stroke="#fff" stroke-opacity="0.5" stroke-width="5.7" stroke-dasharray="0.8 11.4" fill="none"/>
<path d="M560.2 369 L646 311.6" stroke="#54546c" stroke-width="5.7" stroke-linecap="round" stroke-linejoin="round" fill="none"/>
<path d="M560.2 369 L646 311.6" stroke="#72728e" stroke-width="4.1" stroke-linecap="round" stroke-linejoin="round" fill="none" transform="translate(-0.3 -0.5)"/>
<path d="M560.2 369 L646 311.6" stroke="#9a9ab6" stroke-width="1.7" stroke-linecap="round" stroke-linejoin="round" fill="none" transform="translate(-0.8 -1.1)"/>
<path d="M560.2 369 L646 311.6" stroke="#fff" stroke-opacity="0.5" stroke-width="5.7" stroke-dasharray="0.8 11.4" fill="none"/>
<path d="M676.8 681.1 L689.9 283.6" stroke="#565670" stroke-width="9.4" stroke-linecap="round" stroke-linejoin="round" fill="none"/>
<path d="M676.8 681.1 L689.9 283.6" stroke="#7a7a9c" stroke-width="6.8" stroke-linecap="round" stroke-linejoin="round" fill="none" transform="translate(-0.3 -0.5)"/>
<path d="M676.8 681.1 L689.9 283.6" stroke="#a6a6c4" stroke-width="2.8" stroke-linecap="round" stroke-linejoin="round" fill="none" transform="translate(-0.8 -1.1)"/>
<path d="M676.8 681.1 L689.9 283.6" stroke="#fff" stroke-opacity="0.5" stroke-width="9.4" stroke-dasharray="0.8 18.9" fill="none"/>
<path d="M705.6 383.8 L711.1 241.9" stroke="url(#ag2)" stroke-width="13.1" stroke-linecap="butt" fill="none"/>
<path d="M705.6 383.8 L711.1 241.9" stroke="#fff" stroke-opacity="0.18" stroke-width="4.6" fill="none" transform="translate(-1.2 0)"/>
<ellipse cx="711.1" cy="241.9" rx="6.5" ry="2.6" fill="#3a3ae8"/>
<path d="M565.2 276.3 L721 307.2" stroke="#54546c" stroke-width="5.8" stroke-linecap="round" stroke-linejoin="round" fill="none"/>
<path d="M565.2 276.3 L721 307.2" stroke="#72728e" stroke-width="4.2" stroke-linecap="round" stroke-linejoin="round" fill="none" transform="translate(-0.3 -0.5)"/>
<path d="M565.2 276.3 L721 307.2" stroke="#9a9ab6" stroke-width="1.7" stroke-linecap="round" stroke-linejoin="round" fill="none" transform="translate(-0.8 -1.1)"/>
<path d="M565.2 276.3 L721 307.2" stroke="#fff" stroke-opacity="0.5" stroke-width="5.8" stroke-dasharray="0.8 11.5" fill="none"/>
<path d="M609.1 691.2 L613.4 291.1" stroke="#565670" stroke-width="9.5" stroke-linecap="round" stroke-linejoin="round" fill="none"/>
<path d="M609.1 691.2 L613.4 291.1" stroke="#7a7a9c" stroke-width="6.9" stroke-linecap="round" stroke-linejoin="round" fill="none" transform="translate(-0.3 -0.5)"/>
<path d="M609.1 691.2 L613.4 291.1" stroke="#a6a6c4" stroke-width="2.9" stroke-linecap="round" stroke-linejoin="round" fill="none" transform="translate(-0.8 -1.1)"/>
<path d="M609.1 691.2 L613.4 291.1" stroke="#fff" stroke-opacity="0.5" stroke-width="9.5" stroke-dasharray="0.8 19" fill="none"/>
<path d="M506.3 353.1 L665.5 388.8 L745.9 328.2 L594.7 297.6 L506.3 353.1" stroke="#6262a0" stroke-width="6.1" stroke-linecap="round" stroke-linejoin="round" fill="none"/>
<path d="M506.3 353.1 L665.5 388.8 L745.9 328.2 L594.7 297.6 L506.3 353.1" stroke="#8686c8" stroke-width="4.4" stroke-linecap="round" stroke-linejoin="round" fill="none" transform="translate(-0.3 -0.5)"/>
<path d="M506.3 353.1 L665.5 388.8 L745.9 328.2 L594.7 297.6 L506.3 353.1" stroke="#bcbcf2" stroke-width="1.8" stroke-linecap="round" stroke-linejoin="round" fill="none" transform="translate(-0.8 -1.1)"/>
<path d="M506.3 353.1 L665.5 388.8 L745.9 328.2 L594.7 297.6 L506.3 353.1" stroke="#fff" stroke-opacity="0.5" stroke-width="6.1" stroke-dasharray="0.8 12.3" fill="none"/>
<path d="M608.1 379.8 L691.5 320.9" stroke="#54546c" stroke-width="5.8" stroke-linecap="round" stroke-linejoin="round" fill="none"/>
<path d="M608.1 379.8 L691.5 320.9" stroke="#72728e" stroke-width="4.2" stroke-linecap="round" stroke-linejoin="round" fill="none" transform="translate(-0.3 -0.5)"/>
<path d="M608.1 379.8 L691.5 320.9" stroke="#9a9ab6" stroke-width="1.7" stroke-linecap="round" stroke-linejoin="round" fill="none" transform="translate(-0.8 -1.1)"/>
<path d="M608.1 379.8 L691.5 320.9" stroke="#fff" stroke-opacity="0.5" stroke-width="5.8" stroke-dasharray="0.8 11.6" fill="none"/>
<path d="M560 320.4 L646.9 265.8" stroke="#54546c" stroke-width="5.8" stroke-linecap="round" stroke-linejoin="round" fill="none"/>
<path d="M560 320.4 L646.9 265.8" stroke="#72728e" stroke-width="4.2" stroke-linecap="round" stroke-linejoin="round" fill="none" transform="translate(-0.3 -0.5)"/>
<path d="M560 320.4 L646.9 265.8" stroke="#9a9ab6" stroke-width="1.7" stroke-linecap="round" stroke-linejoin="round" fill="none" transform="translate(-0.8 -1.1)"/>
<path d="M560 320.4 L646.9 265.8" stroke="#fff" stroke-opacity="0.5" stroke-width="5.8" stroke-dasharray="0.8 11.6" fill="none"/>
<path d="M565.1 251.9 L722 281.8" stroke="#54546c" stroke-width="5.8" stroke-linecap="round" stroke-linejoin="round" fill="none"/>
<path d="M565.1 251.9 L722 281.8" stroke="#72728e" stroke-width="4.2" stroke-linecap="round" stroke-linejoin="round" fill="none" transform="translate(-0.3 -0.5)"/>
<path d="M565.1 251.9 L722 281.8" stroke="#9a9ab6" stroke-width="1.7" stroke-linecap="round" stroke-linejoin="round" fill="none" transform="translate(-0.8 -1.1)"/>
<path d="M565.1 251.9 L722 281.8" stroke="#fff" stroke-opacity="0.5" stroke-width="5.8" stroke-dasharray="0.8 11.6" fill="none"/>
<path d="M538.8 339.2 L694.8 373.3" stroke="#54546c" stroke-width="5.8" stroke-linecap="round" stroke-linejoin="round" fill="none"/>
<path d="M538.8 339.2 L694.8 373.3" stroke="#72728e" stroke-width="4.2" stroke-linecap="round" stroke-linejoin="round" fill="none" transform="translate(-0.3 -0.5)"/>
<path d="M538.8 339.2 L694.8 373.3" stroke="#9a9ab6" stroke-width="1.7" stroke-linecap="round" stroke-linejoin="round" fill="none" transform="translate(-0.8 -1.1)"/>
<path d="M538.8 339.2 L694.8 373.3" stroke="#fff" stroke-opacity="0.5" stroke-width="5.8" stroke-dasharray="0.8 11.6" fill="none"/>
<path d="M559.9 294.6 L647.4 241.5" stroke="#54546c" stroke-width="5.8" stroke-linecap="round" stroke-linejoin="round" fill="none"/>
<path d="M559.9 294.6 L647.4 241.5" stroke="#72728e" stroke-width="4.2" stroke-linecap="round" stroke-linejoin="round" fill="none" transform="translate(-0.3 -0.5)"/>
<path d="M559.9 294.6 L647.4 241.5" stroke="#9a9ab6" stroke-width="1.8" stroke-linecap="round" stroke-linejoin="round" fill="none" transform="translate(-0.8 -1.1)"/>
<path d="M559.9 294.6 L647.4 241.5" stroke="#fff" stroke-opacity="0.5" stroke-width="5.8" stroke-dasharray="0.8 11.7" fill="none"/>
<path d="M653.5 705.2 L663.8 301.1" stroke="#565670" stroke-width="9.7" stroke-linecap="round" stroke-linejoin="round" fill="none"/>
<path d="M653.5 705.2 L663.8 301.1" stroke="#7a7a9c" stroke-width="6.9" stroke-linecap="round" stroke-linejoin="round" fill="none" transform="translate(-0.3 -0.5)"/>
<path d="M653.5 705.2 L663.8 301.1" stroke="#a6a6c4" stroke-width="2.9" stroke-linecap="round" stroke-linejoin="round" fill="none" transform="translate(-0.8 -1.1)"/>
<path d="M653.5 705.2 L663.8 301.1" stroke="#fff" stroke-opacity="0.5" stroke-width="9.7" stroke-dasharray="0.8 19.3" fill="none"/>
<path d="M547.1 401.3 L545.8 257.1" stroke="url(#ag3)" stroke-width="13.4" stroke-linecap="butt" fill="none"/>
<path d="M547.1 401.3 L545.8 257.1" stroke="#fff" stroke-opacity="0.18" stroke-width="4.7" fill="none" transform="translate(-1.2 0)"/>
<ellipse cx="545.8" cy="257.1" rx="6.7" ry="2.7" fill="#3a3ae8"/>
<path d="M505.3 305 L666.8 338.9 L748.3 281.3 L595 252.3 L505.3 305" stroke="#6262a0" stroke-width="6.2" stroke-linecap="round" stroke-linejoin="round" fill="none"/>
<path d="M505.3 305 L666.8 338.9 L748.3 281.3 L595 252.3 L505.3 305" stroke="#8686c8" stroke-width="4.5" stroke-linecap="round" stroke-linejoin="round" fill="none" transform="translate(-0.3 -0.5)"/>
<path d="M505.3 305 L666.8 338.9 L748.3 281.3 L595 252.3 L505.3 305" stroke="#bcbcf2" stroke-width="1.9" stroke-linecap="round" stroke-linejoin="round" fill="none" transform="translate(-0.8 -1.1)"/>
<path d="M505.3 305 L666.8 338.9 L748.3 281.3 L595 252.3 L505.3 305" stroke="#fff" stroke-opacity="0.5" stroke-width="6.2" stroke-dasharray="0.8 12.4" fill="none"/>
<path d="M608.6 330.7 L693.1 274.6" stroke="#54546c" stroke-width="5.9" stroke-linecap="round" stroke-linejoin="round" fill="none"/>
<path d="M608.6 330.7 L693.1 274.6" stroke="#72728e" stroke-width="4.2" stroke-linecap="round" stroke-linejoin="round" fill="none" transform="translate(-0.3 -0.5)"/>
<path d="M608.6 330.7 L693.1 274.6" stroke="#9a9ab6" stroke-width="1.8" stroke-linecap="round" stroke-linejoin="round" fill="none" transform="translate(-0.8 -1.1)"/>
<path d="M608.6 330.7 L693.1 274.6" stroke="#fff" stroke-opacity="0.5" stroke-width="5.9" stroke-dasharray="0.8 11.8" fill="none"/>
<path d="M538.2 292.3 L696.5 324.7" stroke="#54546c" stroke-width="5.9" stroke-linecap="round" stroke-linejoin="round" fill="none"/>
<path d="M538.2 292.3 L696.5 324.7" stroke="#72728e" stroke-width="4.3" stroke-linecap="round" stroke-linejoin="round" fill="none" transform="translate(-0.3 -0.5)"/>
<path d="M538.2 292.3 L696.5 324.7" stroke="#9a9ab6" stroke-width="1.8" stroke-linecap="round" stroke-linejoin="round" fill="none" transform="translate(-0.8 -1.1)"/>
<path d="M538.2 292.3 L696.5 324.7" stroke="#fff" stroke-opacity="0.5" stroke-width="5.9" stroke-dasharray="0.8 11.8" fill="none"/>
<path d="M504.7 279.5 L667.5 312.4 L749.5 256.4 L595.1 228.2 L504.7 279.5" stroke="#6262a0" stroke-width="6.3" stroke-linecap="round" stroke-linejoin="round" fill="none"/>
<path d="M504.7 279.5 L667.5 312.4 L749.5 256.4 L595.1 228.2 L504.7 279.5" stroke="#8686c8" stroke-width="4.5" stroke-linecap="round" stroke-linejoin="round" fill="none" transform="translate(-0.3 -0.5)"/>
<path d="M504.7 279.5 L667.5 312.4 L749.5 256.4 L595.1 228.2 L504.7 279.5" stroke="#bcbcf2" stroke-width="1.9" stroke-linecap="round" stroke-linejoin="round" fill="none" transform="translate(-0.8 -1.1)"/>
<path d="M504.7 279.5 L667.5 312.4 L749.5 256.4 L595.1 228.2 L504.7 279.5" stroke="#fff" stroke-opacity="0.5" stroke-width="6.3" stroke-dasharray="0.8 12.5" fill="none"/>
<path d="M608.8 304.6 L693.9 250.1" stroke="#54546c" stroke-width="5.9" stroke-linecap="round" stroke-linejoin="round" fill="none"/>
<path d="M608.8 304.6 L693.9 250.1" stroke="#72728e" stroke-width="4.3" stroke-linecap="round" stroke-linejoin="round" fill="none" transform="translate(-0.3 -0.5)"/>
<path d="M608.8 304.6 L693.9 250.1" stroke="#9a9ab6" stroke-width="1.8" stroke-linecap="round" stroke-linejoin="round" fill="none" transform="translate(-0.8 -1.1)"/>
<path d="M608.8 304.6 L693.9 250.1" stroke="#fff" stroke-opacity="0.5" stroke-width="5.9" stroke-dasharray="0.8 11.9" fill="none"/>
<path d="M538 267.4 L697.4 298.8" stroke="#54546c" stroke-width="6" stroke-linecap="round" stroke-linejoin="round" fill="none"/>
<path d="M538 267.4 L697.4 298.8" stroke="#72728e" stroke-width="4.3" stroke-linecap="round" stroke-linejoin="round" fill="none" transform="translate(-0.3 -0.5)"/>
<path d="M538 267.4 L697.4 298.8" stroke="#9a9ab6" stroke-width="1.8" stroke-linecap="round" stroke-linejoin="round" fill="none" transform="translate(-0.8 -1.1)"/>
<path d="M538 267.4 L697.4 298.8" stroke="#fff" stroke-opacity="0.5" stroke-width="6" stroke-dasharray="0.8 11.9" fill="none"/>
<path d="M651.4 425.9 L654.8 278.2" stroke="url(#ag4)" stroke-width="13.8" stroke-linecap="butt" fill="none"/>
<path d="M651.4 425.9 L654.8 278.2" stroke="#fff" stroke-opacity="0.18" stroke-width="4.8" fill="none" transform="translate(-1.2 0)"/>
<ellipse cx="654.8" cy="278.2" rx="6.9" ry="2.8" fill="#3a3ae8"/>
</svg>
<svg id="ov" style="left:0;top:0" width="1920" height="1032" viewBox="0 0 1920 1032" fill="none">
 <defs>
  <g id="chk"><circle r="7.600" fill="#62c03c"/><circle r="6.300" fill="#86dc58"/><path d="M-3.600 0.300l2.700 2.800l4.900-5.800" stroke="#fff" stroke-width="2.100" fill="none"/></g>
 </defs>
 <!-- status checks -->
 <use href="#chk" x="18" y="216"/><use href="#chk" x="157" y="231.800"/><use href="#chk" x="157" y="253"/><use href="#chk" x="157" y="274.200"/>
 <!-- legend -->
 <g>
  <rect x="72.500" y="580" width="30" height="42.200" fill="#2222f4"/><rect x="72.500" y="622" width="30" height="42.200" fill="#3e3ef0"/><rect x="72.500" y="664" width="30" height="42.200" fill="#5858f2"/>
  <rect x="72.500" y="706" width="30" height="42.200" fill="#7272f5"/><rect x="72.500" y="748" width="30" height="42.200" fill="#8c8cf8"/><rect x="72.500" y="790" width="30" height="42.200" fill="#a8a8fb"/><rect x="72.500" y="832" width="30" height="43" fill="#c4c4fe"/>
  <rect x="72.500" y="580.500" width="30" height="294.500" stroke="#222" stroke-width="1"/>
 </g>
 <!-- axes -->
 <g>
  <path d="M47 951V926" stroke="#1e34e8" stroke-width="2.200"/><path d="M47 919.500l-3.600 9h7.200z" fill="#1e34e8"/>
  <path d="M48 951L59 943.500" stroke="#1f9a2a" stroke-width="2.200"/><path d="M67 937.500l-9.800 3l4.200 6z" fill="#1f9a2a"/>
  <path d="M48 952.500L70 958.500" stroke="#e62a1e" stroke-width="2.200"/><path d="M80.500 961l-9.500-6.200l-1.800 7z" fill="#e62a1e"/>
  <circle cx="47.500" cy="952" r="3.600" fill="#777"/><circle cx="46.600" cy="951" r="1.500" fill="#ddd"/>
 </g>
 <!-- label boxes + leaders -->
 <path d="M634.500 193L607 221.500M634.500 277L603 310.500M390.500 745.500L360 777" stroke="#000" stroke-width="0.900"/>
 <rect x="634.500" y="177.500" width="23" height="16" fill="#fff" stroke="#000" stroke-width="1"/>
 <rect x="633.500" y="261.500" width="23" height="16" fill="#fff" stroke="#000" stroke-width="1"/>
 <rect x="389.500" y="729.500" width="23" height="16" fill="#fff" stroke="#000" stroke-width="1"/>

 <!-- view toolbar -->
 <g>
  <rect x="904" y="164" width="24" height="24" fill="#d2d2d2"/><rect x="1040" y="164" width="27" height="24" fill="#d2d2d2"/><rect x="1098" y="164" width="24" height="24" fill="#d2d2d2"/>
  <path d="M945.500 165V187M991.500 165V187M1037.500 165V187M1094.500 165V187" stroke="#bdbdbd" stroke-width="1"/>
  <g stroke="#111" stroke-width="1.500">
   <path d="M912.500 168.200V180.800H924M908 171.600H920.500V183.700"/>
   <path d="M933.500 174l3.500 3.300l3.500-3.300M979.500 174l3.500 3.300l3.500-3.300M1025.500 174l3.500 3.300l3.500-3.300" stroke="#333" stroke-width="1.200"/>
   <path d="M964.500 174V169H954.500V179H960" stroke-width="1.200"/><circle cx="964" cy="178.500" r="2.900" stroke-width="1.200"/><path d="M966.200 180.600L969.700 183.700" stroke-width="1.300"/>
   <rect x="999.500" y="170.300" width="15" height="12" rx="2" stroke-width="1.300"/>
   <circle cx="1010.500" cy="171.500" r="3.600" fill="#fff" stroke-width="1"/><path d="M1007 171.500h7M1010.500 168v7" stroke-width="0.800"/>
   <path d="M1046.500 171.500L1051 167.500H1061.500V178.500L1057 183.500H1046.500ZM1046.500 171.500H1057V183.500M1057 171.500L1061.500 167.500M1051 167.500V178.500H1061.500M1051 178.500L1046.500 183.500" stroke-width="1.200"/>
   <path d="M1073.500 171.500L1078 167.500H1088.500V178.500L1084 183.500H1073.500Z" fill="#000" stroke-width="1"/><path d="M1073.500 171.500H1084V183.500M1084 171.500L1088.500 167.500" stroke="#fff" stroke-width="0.900"/>
   <path d="M1102.500 172.500L1111 169.500L1118 171V177L1107 180.500L1102.500 178ZM1102.500 172.500L1107 174.800L1118 171M1107 174.800V180.500" stroke-width="1.300" stroke-linejoin="round"/>
   <path d="M1128.500 176.500L1136.200 169L1144 176.500M1130.800 175V183.500H1134.200V178.500H1138.200V183.500H1141.600V175" stroke="#333" stroke-width="1.100"/>
   <path d="M1155.500 172.500V168.500H1159.500M1155.500 168.500L1160 173M1166.500 168.500H1170.500V172.500M1170.500 168.500L1166 173M1155.500 179.500V183.500H1159.500M1155.500 183.500L1160 179M1170.500 179.500V183.500H1166.500M1170.500 183.500L1166 179" stroke-width="1.200"/>
  </g>
 </g>
 <!-- view cube -->
 <g>
  <ellipse cx="1122" cy="235.300" rx="34.500" ry="18.600" stroke="#e6e6e6" stroke-width="7"/>
  <path d="M1095.400 204.500L1116.600 193.400L1146.600 198.900L1145 229L1129.500 247.600L1099.500 235.700Z" fill="#b2b2b2" fill-opacity="0.850"/>
  <path d="M1095.400 204.500L1131 212L1129.500 247.600L1099.500 235.700Z" fill="#999" fill-opacity="0.350"/>
  <path d="M1095.400 204.500L1116.600 193.400L1146.600 198.900L1131 212Z" fill="#fff" fill-opacity="0.150"/>
  <path d="M1095.400 204.500L1116.600 193.400L1146.600 198.900L1145 229L1129.500 247.600L1099.500 235.700ZM1095.400 204.500L1131 212L1146.600 198.900M1131 212L1129.500 247.600M1116.600 193.400L1117.200 222.300L1099.500 235.700M1117.200 222.300L1145 229" stroke="#8c8c8c" stroke-width="0.800"/>
 </g>
 <!-- tree -->
 <rect x="1029" y="291.500" width="129" height="19.500" fill="#ee7326"/>
 <path d="M1021.500 298.500v6h-6z" fill="#444"/>
</svg>
<div id="split"></div>
<div id="panel"></div>
<div id="rborder" class="abs" style="left:1919px;top:189px;width:1px;height:811px;background:#c4c4c4"></div>
<div class="abs" style="left:1183px;top:162px;width:737px;height:27.500px;background:#ee7326"></div>
<div class="abs" style="left:1188.500px;top:167px;width:103px;height:22.500px;background:#f4f4f4"></div>
<div class="abs" style="left:1343px;top:225px;width:566px;height:20px;background:#e6e6e6"></div>
<div class="abs" style="left:1193px;top:256px;width:716px;height:304px;border:1px solid #b4b4b4;background:#fff"></div>
<div class="abs" style="left:1194px;top:257px;width:706px;height:30px;background:#efefef"></div>
<div class="abs" style="left:1189.500px;top:287px;width:710px;height:256.700px;background:#ffff33"></div>
<div class="abs" style="left:1189.500px;top:287px;width:710px;height:32px;background:#e3e033"></div>
<div class="abs" style="left:1437px;top:257px;width:75px;height:30px;background:#b7603a"></div>
<div class="abs" style="left:1900px;top:257px;width:8px;height:286px;background:#f0f0f0"></div>
<div class="abs" style="left:1901px;top:258px;width:6px;height:28px;background:#c4c4c4"></div>
<div class="abs" style="left:1194px;top:543.700px;width:714px;height:15.300px;background:#fff"></div>
<div class="abs" style="left:1194px;top:548px;width:700px;height:7.700px;background:#d2d2d4"></div>
<div class="abs" style="left:1193px;top:581px;width:716px;height:1px;background:#d4d4d4"></div>
<svg style="left:0;top:162px" width="1920" height="836" viewBox="0 162 1920 836" fill="none">
<path d="M1290.5 257V287" stroke="#bdbdbd" stroke-width="1"/>
<path d="M1340.5 257V287" stroke="#bdbdbd" stroke-width="1"/>
<path d="M1390.5 257V287" stroke="#bdbdbd" stroke-width="1"/>
<path d="M1436.5 257V287" stroke="#bdbdbd" stroke-width="1"/>
<path d="M1512.5 257V287" stroke="#bdbdbd" stroke-width="1"/>
<path d="M1560.5 257V287" stroke="#bdbdbd" stroke-width="1"/>
<path d="M1626.5 257V287" stroke="#bdbdbd" stroke-width="1"/>
<path d="M1716.5 257V287" stroke="#bdbdbd" stroke-width="1"/>
<path d="M1782.5 257V287" stroke="#bdbdbd" stroke-width="1"/>
<path d="M1853.5 257V287" stroke="#bdbdbd" stroke-width="1"/>
<path d="M1290.5 287V543" stroke="#8f8f28" stroke-width="1"/>
<path d="M1340.5 287V543" stroke="#8f8f28" stroke-width="1"/>
<path d="M1390.5 287V543" stroke="#8f8f28" stroke-width="1"/>
<path d="M1436.5 287V543" stroke="#8f8f28" stroke-width="1"/>
<path d="M1512.5 287V543" stroke="#8f8f28" stroke-width="1"/>
<path d="M1560.5 287V543" stroke="#8f8f28" stroke-width="1"/>
<path d="M1626.5 287V543" stroke="#8f8f28" stroke-width="1"/>
<path d="M1716.5 287V543" stroke="#8f8f28" stroke-width="1"/>
<path d="M1782.5 287V543" stroke="#8f8f28" stroke-width="1"/>
<path d="M1853.5 287V543" stroke="#8f8f28" stroke-width="1"/>
<path d="M1193.500 287V543" stroke="#8f8f28" stroke-width="1"/>
<path d="M1193.500 289.5H1900" stroke="#9a9a2a" stroke-width="1"/>
<path d="M1193.500 318.5H1900" stroke="#9a9a2a" stroke-width="1"/>
<path d="M1193.500 347.5H1900" stroke="#9a9a2a" stroke-width="1"/>
<path d="M1193.500 376.5H1900" stroke="#9a9a2a" stroke-width="1"/>
<path d="M1193.500 405.5H1900" stroke="#9a9a2a" stroke-width="1"/>
<path d="M1193.500 434.5H1900" stroke="#9a9a2a" stroke-width="1"/>
<path d="M1193.500 463.5H1900" stroke="#9a9a2a" stroke-width="1"/>
<path d="M1193.500 492.5H1900" stroke="#9a9a2a" stroke-width="1"/>
<path d="M1193.500 521.5H1900" stroke="#9a9a2a" stroke-width="1"/>
<rect x="1194.500" y="290.500" width="95" height="27.500" stroke="#e9962a" stroke-width="1.2"/>
<g><circle cx="1879" cy="304" r="7.800" fill="#5cba22"/><circle cx="1879" cy="304" r="6.200" fill="#8be03e"/><path d="M1875 304.3l3 3l5.200-6.200" stroke="#f6ffc0" stroke-width="2.200"/></g>
<g><circle cx="1879" cy="333" r="7.800" fill="#5cba22"/><circle cx="1879" cy="333" r="6.200" fill="#8be03e"/><path d="M1875 333.3l3 3l5.200-6.200" stroke="#f6ffc0" stroke-width="2.200"/></g>
<g><circle cx="1879" cy="362" r="7.800" fill="#5cba22"/><circle cx="1879" cy="362" r="6.200" fill="#8be03e"/><path d="M1875 362.3l3 3l5.200-6.200" stroke="#f6ffc0" stroke-width="2.200"/></g>
<g><circle cx="1879" cy="391" r="7.800" fill="#5cba22"/><circle cx="1879" cy="391" r="6.200" fill="#8be03e"/><path d="M1875 391.3l3 3l5.200-6.200" stroke="#f6ffc0" stroke-width="2.200"/></g>
<g><circle cx="1879" cy="420" r="7.800" fill="#5cba22"/><circle cx="1879" cy="420" r="6.200" fill="#8be03e"/><path d="M1875 420.3l3 3l5.200-6.200" stroke="#f6ffc0" stroke-width="2.200"/></g>
<g><circle cx="1879" cy="449" r="7.800" fill="#5cba22"/><circle cx="1879" cy="449" r="6.200" fill="#8be03e"/><path d="M1875 449.3l3 3l5.200-6.200" stroke="#f6ffc0" stroke-width="2.200"/></g>
<g><circle cx="1879" cy="478" r="7.800" fill="#5cba22"/><circle cx="1879" cy="478" r="6.200" fill="#8be03e"/><path d="M1875 478.3l3 3l5.200-6.200" stroke="#f6ffc0" stroke-width="2.200"/></g>
<g><circle cx="1879" cy="507" r="7.800" fill="#5cba22"/><circle cx="1879" cy="507" r="6.200" fill="#8be03e"/><path d="M1875 507.3l3 3l5.200-6.200" stroke="#f6ffc0" stroke-width="2.200"/></g>
<g clip-path="url(#rowclip)"><circle cx="1879" cy="536" r="7.800" fill="#5cba22"/><circle cx="1879" cy="536" r="6.200" fill="#8be03e"/><path d="M1875 536.3l3 3l5.200-6.200" stroke="#f6ffc0" stroke-width="2.200"/></g>
<defs><clipPath id="rowclip"><rect x="1860" y="520" width="40" height="23"/></clipPath></defs>
<rect x="1438.800" y="253.200" width="71.400" height="296.500" rx="8" stroke="#d2151c" stroke-width="4.800"/>
<path d="M1493.300 270.600h7.800l-3.900 5.700z" fill="#fff"/><path d="M1897 232.500h7l-3.500 5.500z" fill="#111"/>
</svg>
 <!-- red arrow -->
<svg style="left:0;top:0" width="1920" height="1032" viewBox="0 0 1920 1032" fill="none">
 <path d="M636.0 216.5C646.7 214.7 675.3 208.2 700.0 205.5C724.7 202.8 759.0 201.0 784.0 200.5C809.0 200.0 828.7 201.1 850.0 202.5C871.3 203.9 887.0 204.6 912.0 209.0C937.0 213.4 978.7 223.5 1000.0 228.8C1021.3 234.1 1023.0 235.8 1040.0 241.0C1057.0 246.2 1083.4 253.1 1101.7 259.8C1120.0 266.5 1135.7 274.0 1150.0 281.0C1164.3 288.0 1181.2 298.5 1187.5 302.0" stroke="#d8141a" stroke-width="7" stroke-linecap="round"/>
 <path d="M619.500 219.500L645 206.500L641 216L648 229.500Z" fill="#d8141a" stroke="#d8141a" stroke-width="2" stroke-linejoin="round"/>
</svg>
<div id="status">
</div>
<div id="texts">
<div class="t" style="left:786.00px;top:7.44px;font-size:13.3px;color:#fff;letter-spacing:0.219px;">Pedestal + spread footing.ideaDet</div>
<div class="t" style="left:419.00px;top:37.85px;font-size:15.3px;color:#fff;letter-spacing:-1.174px;">PROJECT</div>
<div class="t" style="left:522.00px;top:37.85px;font-size:15.3px;color:#fff;letter-spacing:-0.320px;">DESIGN</div>
<div class="t" style="left:618.00px;top:37.85px;font-size:15.3px;color:#ee7326;letter-spacing:-1.086px;">CHECK</div>
<div class="t" style="left:707.00px;top:37.85px;font-size:15.3px;color:#fff;letter-spacing:-1.200px;">REPORT</div>
<div class="t" style="left:803.00px;top:37.85px;font-size:15.3px;color:#fff;letter-spacing:-0.545px;">MATERIALS</div>
<div class="t" style="left:1701.00px;top:41.57px;font-size:11.5px;color:#8c8c8c;letter-spacing:0.086px;">Search on ideastatica.com</div>
<div class="t" style="left:10.50px;top:77.14px;font-size:12px;color:#fff;letter-spacing:-0.530px;">Detail1</div>
<div class="t" style="left:85.70px;top:107.14px;font-size:12px;color:#000;letter-spacing:-0.720px;">New</div>
<div class="t" style="left:121.80px;top:107.14px;font-size:12px;color:#000;letter-spacing:-0.371px;">Copy</div>
<div class="t" style="left:163.60px;top:107.14px;font-size:12px;color:#000;letter-spacing:-0.538px;">Undo</div>
<div class="t" style="left:202.70px;top:107.14px;font-size:12px;color:#c4c4c4;letter-spacing:-1.171px;">Redo</div>
<div class="t" style="left:242.00px;top:107.14px;font-size:12px;color:#000;letter-spacing:-1.200px;">Save</div>
<div class="t" style="left:280.00px;top:105.14px;font-size:12px;color:#000;letter-spacing:0.097px;">Member</div>
<div class="t" style="left:286.00px;top:120.14px;font-size:12px;color:#000;letter-spacing:-0.504px;">names</div>
<div class="t" style="left:329.00px;top:105.14px;font-size:12px;color:#c4c4c4;">Dimension</div>
<div class="t" style="left:346.50px;top:120.14px;font-size:12px;color:#c4c4c4;letter-spacing:-0.420px;">lines</div>
<div class="t" style="left:395.50px;top:105.14px;font-size:12px;color:#c4c4c4;letter-spacing:-1.037px;">Rebars</div>
<div class="t" style="left:439.50px;top:105.14px;font-size:12px;color:#c4c4c4;letter-spacing:-0.499px;">Grid</div>
<div class="t" style="left:471.50px;top:105.14px;font-size:12px;color:#000;letter-spacing:-0.674px;">Loads</div>
<div class="t" style="left:516.60px;top:107.14px;font-size:12px;color:#000;letter-spacing:-0.720px;">New</div>
<div class="t" style="left:549.50px;top:107.14px;font-size:12px;color:#000;letter-spacing:-0.502px;">Gallery</div>
<div class="t" style="left:595.30px;top:107.14px;font-size:12px;color:#000;letter-spacing:-0.308px;">Settings</div>
<div class="t" style="left:642.50px;top:107.14px;font-size:12px;color:#000;letter-spacing:-0.294px;">Calculate</div>
<div class="t" style="left:701.00px;top:105.14px;font-size:12px;color:#000;letter-spacing:-0.090px;">Summary</div>
<div class="t" style="left:756.00px;top:105.14px;font-size:12px;color:#000;letter-spacing:-0.013px;">Strength</div>
<div class="t" style="left:805.40px;top:105.14px;font-size:12px;color:#000;letter-spacing:-0.096px;">Anchorage</div>
<div class="t" style="left:878.50px;top:105.14px;font-size:12px;color:#c4c4c4;letter-spacing:-1.002px;">Stress</div>
<div class="t" style="left:867.50px;top:120.14px;font-size:12px;color:#c4c4c4;letter-spacing:0.358px;">limitation</div>
<div class="t" style="left:923.50px;top:105.14px;font-size:12px;color:#c4c4c4;letter-spacing:-0.834px;">Crack</div>
<div class="t" style="left:924.50px;top:120.14px;font-size:12px;color:#c4c4c4;letter-spacing:0.040px;">width</div>
<div class="t" style="left:958.50px;top:105.14px;font-size:12px;color:#c4c4c4;letter-spacing:-0.021px;">Deflection</div>
<div class="t" style="left:1016.50px;top:105.14px;font-size:12px;color:#000;letter-spacing:-0.106px;">Auxiliary</div>
<div class="t" style="left:44.50px;top:147.14px;font-size:12px;color:#000;letter-spacing:-0.071px;">Project items</div>
<div class="t" style="left:204.60px;top:147.14px;font-size:12px;color:#000;letter-spacing:-1.025px;">Data</div>
<div class="t" style="left:316.50px;top:147.14px;font-size:12px;color:#000;letter-spacing:-0.672px;">Labels</div>
<div class="t" style="left:435.50px;top:147.14px;font-size:12px;color:#000;letter-spacing:-0.779px;">Draw</div>
<div class="t" style="left:527.50px;top:147.14px;font-size:12px;color:#000;letter-spacing:-0.307px;">Pictures</div>
<div class="t" style="left:613.50px;top:147.14px;font-size:12px;color:#000;letter-spacing:0.041px;">Calculation</div>
<div class="t" style="left:831.50px;top:147.14px;font-size:12px;color:#000;letter-spacing:-0.159px;">Code-check results</div>
<div class="t" style="left:1208.40px;top:147.14px;font-size:12px;color:#000;letter-spacing:-0.619px;">Results</div>
<div class="t" style="left:1292.50px;top:74.14px;font-size:12px;color:#000;letter-spacing:-0.322px;">Label extreme</div>
<div class="t" style="left:1292.50px;top:96.24px;font-size:12px;color:#000;letter-spacing:-0.494px;">Group</div>
<div class="t" style="left:1343.70px;top:96.24px;font-size:12px;color:#000;letter-spacing:-1.200px;">Bar</div>
<div class="t" style="left:1071.00px;top:106.71px;font-size:17px;color:#111;">τ</div>
<div class="t" style="left:1081.50px;top:112.63px;font-size:10px;color:#111;">b</div>
<div class="t" style="left:1090.50px;top:107.56px;font-size:16px;color:#111;letter-spacing:1.500px;">/f</div>
<div class="t" style="left:1105.00px;top:112.63px;font-size:10px;color:#111;letter-spacing:-0.562px;">bu</div>
<div class="t" style="left:1120.00px;top:107.56px;font-size:16px;color:#111;">F</div>
<div class="t" style="left:1131.40px;top:112.63px;font-size:10px;color:#111;letter-spacing:0.130px;">tot</div>
<div class="t" style="left:1146.00px;top:107.56px;font-size:16px;color:#111;letter-spacing:-1.200px;">/F</div>
<div class="t" style="left:1163.60px;top:112.63px;font-size:10px;color:#111;letter-spacing:-0.272px;">lim</div>
<div class="t" style="left:1188.70px;top:106.71px;font-size:17px;color:#111;">τ</div>
<div class="t" style="left:1200.50px;top:112.63px;font-size:10px;color:#111;">b</div>
<div class="t" style="left:1220.00px;top:107.56px;font-size:16px;color:#111;">F</div>
<div class="t" style="left:1231.40px;top:112.63px;font-size:10px;color:#111;letter-spacing:0.280px;">tot</div>
<div class="t" style="left:1256.00px;top:107.56px;font-size:16px;color:#111;">F</div>
<div class="t" style="left:1267.50px;top:112.63px;font-size:10px;color:#111;letter-spacing:-0.472px;">lim</div>
<div class="t" style="left:1097.00px;top:68.60px;font-size:15px;color:#ee7326;">%</div>
<div class="t" style="left:1152.00px;top:68.60px;font-size:15px;color:#ee7326;">%</div>
<div class="t" style="left:8.00px;top:1010.14px;font-size:12px;color:#fff;letter-spacing:-0.314px;">Design Code: ACI</div>
<div class="t" style="left:115.00px;top:1010.14px;font-size:12px;color:#fff;letter-spacing:0.026px;">Rounding: Imperial</div>
<div class="t" style="left:232.00px;top:1010.14px;font-size:12px;color:#fff;letter-spacing:-0.064px;">Presentation Units: Imperial</div>
<div class="t" style="left:30.60px;top:211.14px;font-size:12px;color:#000;font-weight:bold;letter-spacing:-0.029px;">Strength</div>
<div class="t" style="left:11.00px;top:226.94px;font-size:12px;color:#111;letter-spacing:-0.288px;">Concrete</div>
<div class="t" style="left:98.00px;top:226.94px;font-size:12px;color:#111;letter-spacing:0.331px;">C+M+V</div>
<div class="t" style="left:175.30px;top:226.94px;font-size:12px;color:#111;letter-spacing:-0.764px;">99.6%</div>
<div class="t" style="left:11.00px;top:247.94px;font-size:12px;color:#111;letter-spacing:-0.142px;">Reinforcement</div>
<div class="t" style="left:98.00px;top:247.94px;font-size:12px;color:#111;letter-spacing:0.331px;">C+M+V</div>
<div class="t" style="left:175.30px;top:247.94px;font-size:12px;color:#111;letter-spacing:-0.764px;">54.1%</div>
<div class="t" style="left:11.00px;top:268.94px;font-size:12px;color:#111;letter-spacing:-0.109px;">Anchorage</div>
<div class="t" style="left:98.00px;top:268.94px;font-size:12px;color:#111;letter-spacing:0.331px;">C+M+V</div>
<div class="t" style="left:175.30px;top:268.94px;font-size:12px;color:#111;letter-spacing:-0.764px;">99.0%</div>
<div class="t" style="left:1033.70px;top:295.34px;font-size:12px;color:#fff;font-weight:bold;letter-spacing:-0.100px;">Strength</div>
<div class="t" style="left:1033.50px;top:317.04px;font-size:12px;color:#444;letter-spacing:0.206px;">C+M+V</div>
<div class="t" style="left:84.50px;top:518.61px;font-size:17px;color:#000;letter-spacing:1.385px;">τb</div>
<div class="t" style="left:82.00px;top:539.91px;font-size:10.5px;color:#000;letter-spacing:0.488px;">[ksi]</div>
<div class="t" style="left:48.50px;top:576.49px;font-size:11px;color:#000;letter-spacing:0.163px;">0.7</div>
<div class="t" style="left:48.50px;top:618.49px;font-size:11px;color:#000;letter-spacing:0.163px;">0.6</div>
<div class="t" style="left:48.50px;top:660.49px;font-size:11px;color:#000;letter-spacing:0.163px;">0.5</div>
<div class="t" style="left:48.50px;top:702.49px;font-size:11px;color:#000;letter-spacing:0.163px;">0.5</div>
<div class="t" style="left:48.50px;top:744.49px;font-size:11px;color:#000;letter-spacing:0.163px;">0.4</div>
<div class="t" style="left:48.50px;top:786.49px;font-size:11px;color:#000;letter-spacing:0.163px;">0.3</div>
<div class="t" style="left:48.50px;top:828.49px;font-size:11px;color:#000;letter-spacing:0.163px;">0.2</div>
<div class="t" style="left:48.50px;top:870.49px;font-size:11px;color:#000;letter-spacing:0.163px;">0.1</div>
<div class="t" style="left:51.00px;top:905.14px;font-size:12px;color:#000;">Z</div>
<div class="t" style="left:68.00px;top:920.64px;font-size:12px;color:#000;">Y</div>
<div class="t" style="left:81.50px;top:947.64px;font-size:12px;color:#000;">X</div>
<div class="t" style="left:638.50px;top:179.99px;font-size:11px;color:#000;letter-spacing:-0.087px;">0.7</div>
<div class="t" style="left:637.50px;top:263.99px;font-size:11px;color:#000;letter-spacing:-0.087px;">0.3</div>
<div class="t" style="left:393.50px;top:731.99px;font-size:11px;color:#000;letter-spacing:-0.087px;">0.0</div>
<div class="t" style="left:1201.00px;top:172.34px;font-size:12px;color:#ee7326;letter-spacing:-0.058px;">Reinforcement</div>
<div class="t" style="left:1192.80px;top:202.14px;font-size:12px;color:#3a3a3a;font-weight:bold;letter-spacing:0.046px;">Extreme Strength: C+M+V (D100.0%)</div>
<div class="t" style="left:1193.00px;top:231.14px;font-size:12px;color:#3a3a3a;letter-spacing:-0.068px;">Load increment</div>
<div class="t" style="left:1349.00px;top:231.14px;font-size:12px;color:#111;letter-spacing:-0.649px;">D100.0%, L100.0%</div>
<div class="t" style="left:1198.30px;top:268.94px;font-size:12px;color:#3a3a3a;font-weight:bold;">Reinforcement</div>
<div class="t" style="left:1295.00px;top:268.94px;font-size:12px;color:#3a3a3a;font-weight:bold;letter-spacing:0.255px;">X [ft]</div>
<div class="t" style="left:1345.00px;top:268.94px;font-size:12px;color:#3a3a3a;font-weight:bold;letter-spacing:0.075px;">Y [ft]</div>
<div class="t" style="left:1394.80px;top:268.94px;font-size:12px;color:#3a3a3a;font-weight:bold;letter-spacing:0.210px;">Z [ft]</div>
<div class="t" style="left:1445.00px;top:268.94px;font-size:12px;color:#fff;font-weight:bold;letter-spacing:-0.128px;">τb [ksi]</div>
<div class="t" style="left:1513.80px;top:268.94px;font-size:12px;color:#3a3a3a;font-weight:bold;letter-spacing:-0.639px;">Fa [kip]</div>
<div class="t" style="left:1565.00px;top:268.94px;font-size:12px;color:#3a3a3a;font-weight:bold;letter-spacing:-0.105px;">F tot [kip]</div>
<div class="t" style="left:1631.00px;top:268.94px;font-size:12px;color:#3a3a3a;font-weight:bold;letter-spacing:-0.123px;">F tot/F lim [%]</div>
<div class="t" style="left:1721.30px;top:268.94px;font-size:12px;color:#3a3a3a;font-weight:bold;letter-spacing:-0.337px;">F lim [kip]</div>
<div class="t" style="left:1787.00px;top:268.94px;font-size:12px;color:#3a3a3a;font-weight:bold;letter-spacing:0.236px;">τb/fbu [%]</div>
<div class="t" style="left:1198.30px;top:299.14px;font-size:12px;color:#45451a;letter-spacing:-0.385px;">AN2</div>
<div class="t" style="left:1295.00px;top:299.14px;font-size:12px;color:#45451a;letter-spacing:-0.219px;">-0.58</div>
<div class="t" style="left:1345.00px;top:299.14px;font-size:12px;color:#45451a;letter-spacing:-0.494px;">0.58</div>
<div class="t" style="left:1394.80px;top:299.14px;font-size:12px;color:#45451a;letter-spacing:-0.219px;">-0.10</div>
<div class="t" style="left:1445.00px;top:299.14px;font-size:12px;color:#45451a;font-weight:bold;letter-spacing:-0.104px;">0.7</div>
<div class="t" style="left:1513.80px;top:299.14px;font-size:12px;color:#45451a;letter-spacing:-0.494px;">0.05</div>
<div class="t" style="left:1565.00px;top:299.14px;font-size:12px;color:#45451a;letter-spacing:-0.414px;">28.25</div>
<div class="t" style="left:1631.00px;top:299.14px;font-size:12px;color:#45451a;letter-spacing:-0.494px;">54.2</div>
<div class="t" style="left:1721.30px;top:299.14px;font-size:12px;color:#45451a;letter-spacing:-0.414px;">52.08</div>
<div class="t" style="left:1787.00px;top:299.14px;font-size:12px;color:#45451a;font-weight:bold;letter-spacing:0.024px;">99.9</div>
<div class="t" style="left:1198.30px;top:328.14px;font-size:12px;color:#45451a;letter-spacing:-0.385px;">AN4</div>
<div class="t" style="left:1295.00px;top:328.14px;font-size:12px;color:#45451a;letter-spacing:-0.219px;">-0.58</div>
<div class="t" style="left:1345.00px;top:328.14px;font-size:12px;color:#45451a;letter-spacing:-0.219px;">-0.58</div>
<div class="t" style="left:1394.80px;top:328.14px;font-size:12px;color:#45451a;letter-spacing:-0.219px;">-0.10</div>
<div class="t" style="left:1445.00px;top:328.14px;font-size:12px;color:#45451a;font-weight:bold;letter-spacing:-0.104px;">0.7</div>
<div class="t" style="left:1513.80px;top:328.14px;font-size:12px;color:#45451a;letter-spacing:-0.494px;">0.05</div>
<div class="t" style="left:1565.00px;top:328.14px;font-size:12px;color:#45451a;letter-spacing:-0.414px;">28.13</div>
<div class="t" style="left:1631.00px;top:328.14px;font-size:12px;color:#45451a;letter-spacing:-0.494px;">54.0</div>
<div class="t" style="left:1721.30px;top:328.14px;font-size:12px;color:#45451a;letter-spacing:-0.414px;">52.08</div>
<div class="t" style="left:1787.00px;top:328.14px;font-size:12px;color:#45451a;font-weight:bold;letter-spacing:0.024px;">99.9</div>
<div class="t" style="left:1198.30px;top:357.14px;font-size:12px;color:#45451a;letter-spacing:-0.385px;">AN2</div>
<div class="t" style="left:1295.00px;top:357.14px;font-size:12px;color:#45451a;letter-spacing:-0.219px;">-0.58</div>
<div class="t" style="left:1345.00px;top:357.14px;font-size:12px;color:#45451a;letter-spacing:-0.494px;">0.58</div>
<div class="t" style="left:1394.80px;top:357.14px;font-size:12px;color:#45451a;letter-spacing:-0.219px;">-1.60</div>
<div class="t" style="left:1445.00px;top:357.14px;font-size:12px;color:#45451a;letter-spacing:-0.654px;">0.7</div>
<div class="t" style="left:1513.80px;top:357.14px;font-size:12px;color:#45451a;letter-spacing:-0.494px;">0.05</div>
<div class="t" style="left:1565.00px;top:357.14px;font-size:12px;color:#45451a;font-weight:bold;letter-spacing:0.024px;">5.21</div>
<div class="t" style="left:1631.00px;top:357.14px;font-size:12px;color:#45451a;letter-spacing:-0.494px;">50.0</div>
<div class="t" style="left:1721.30px;top:357.14px;font-size:12px;color:#45451a;letter-spacing:-0.414px;">10.42</div>
<div class="t" style="left:1787.00px;top:357.14px;font-size:12px;color:#45451a;letter-spacing:-0.494px;">99.9</div>
<div class="t" style="left:1198.30px;top:386.14px;font-size:12px;color:#45451a;letter-spacing:-0.385px;">AN4</div>
<div class="t" style="left:1295.00px;top:386.14px;font-size:12px;color:#45451a;letter-spacing:-0.219px;">-0.58</div>
<div class="t" style="left:1345.00px;top:386.14px;font-size:12px;color:#45451a;letter-spacing:-0.219px;">-0.58</div>
<div class="t" style="left:1394.80px;top:386.14px;font-size:12px;color:#45451a;letter-spacing:-0.219px;">-1.60</div>
<div class="t" style="left:1445.00px;top:386.14px;font-size:12px;color:#45451a;letter-spacing:-0.654px;">0.7</div>
<div class="t" style="left:1513.80px;top:386.14px;font-size:12px;color:#45451a;letter-spacing:-0.494px;">0.05</div>
<div class="t" style="left:1565.00px;top:386.14px;font-size:12px;color:#45451a;font-weight:bold;letter-spacing:0.024px;">5.14</div>
<div class="t" style="left:1631.00px;top:386.14px;font-size:12px;color:#45451a;letter-spacing:-0.494px;">49.3</div>
<div class="t" style="left:1721.30px;top:386.14px;font-size:12px;color:#45451a;letter-spacing:-0.414px;">10.42</div>
<div class="t" style="left:1787.00px;top:386.14px;font-size:12px;color:#45451a;letter-spacing:-0.494px;">99.9</div>
<div class="t" style="left:1198.30px;top:415.14px;font-size:12px;color:#45451a;letter-spacing:-0.385px;">AN2</div>
<div class="t" style="left:1295.00px;top:415.14px;font-size:12px;color:#45451a;letter-spacing:-0.219px;">-0.58</div>
<div class="t" style="left:1345.00px;top:415.14px;font-size:12px;color:#45451a;letter-spacing:-0.494px;">0.58</div>
<div class="t" style="left:1394.80px;top:415.14px;font-size:12px;color:#45451a;letter-spacing:-0.219px;">-0.40</div>
<div class="t" style="left:1445.00px;top:415.14px;font-size:12px;color:#45451a;letter-spacing:-0.654px;">0.6</div>
<div class="t" style="left:1513.80px;top:415.14px;font-size:12px;color:#45451a;letter-spacing:-0.494px;">0.05</div>
<div class="t" style="left:1565.00px;top:415.14px;font-size:12px;color:#45451a;font-weight:bold;letter-spacing:0.088px;">28.25</div>
<div class="t" style="left:1631.00px;top:415.14px;font-size:12px;color:#45451a;letter-spacing:-0.494px;">54.2</div>
<div class="t" style="left:1721.30px;top:415.14px;font-size:12px;color:#45451a;font-weight:bold;letter-spacing:0.088px;">52.08</div>
<div class="t" style="left:1787.00px;top:415.14px;font-size:12px;color:#45451a;letter-spacing:-0.494px;">86.4</div>
<div class="t" style="left:1198.30px;top:444.14px;font-size:12px;color:#45451a;letter-spacing:-0.385px;">AN3</div>
<div class="t" style="left:1295.00px;top:444.14px;font-size:12px;color:#45451a;letter-spacing:-0.494px;">0.58</div>
<div class="t" style="left:1345.00px;top:444.14px;font-size:12px;color:#45451a;letter-spacing:-0.219px;">-0.58</div>
<div class="t" style="left:1394.80px;top:444.14px;font-size:12px;color:#45451a;letter-spacing:-0.219px;">-0.10</div>
<div class="t" style="left:1445.00px;top:444.14px;font-size:12px;color:#45451a;font-weight:bold;letter-spacing:-0.104px;">0.6</div>
<div class="t" style="left:1513.80px;top:444.14px;font-size:12px;color:#45451a;letter-spacing:-0.494px;">0.00</div>
<div class="t" style="left:1565.00px;top:444.14px;font-size:12px;color:#45451a;letter-spacing:-0.494px;">2.43</div>
<div class="t" style="left:1631.00px;top:444.14px;font-size:12px;color:#45451a;letter-spacing:-0.654px;">4.7</div>
<div class="t" style="left:1721.30px;top:444.14px;font-size:12px;color:#45451a;letter-spacing:-0.414px;">52.08</div>
<div class="t" style="left:1787.00px;top:444.14px;font-size:12px;color:#45451a;font-weight:bold;letter-spacing:0.024px;">84.5</div>
<div class="t" style="left:1198.30px;top:473.14px;font-size:12px;color:#45451a;letter-spacing:-0.385px;">AN4</div>
<div class="t" style="left:1295.00px;top:473.14px;font-size:12px;color:#45451a;letter-spacing:-0.219px;">-0.58</div>
<div class="t" style="left:1345.00px;top:473.14px;font-size:12px;color:#45451a;letter-spacing:-0.219px;">-0.58</div>
<div class="t" style="left:1394.80px;top:473.14px;font-size:12px;color:#45451a;letter-spacing:-0.219px;">-0.40</div>
<div class="t" style="left:1445.00px;top:473.14px;font-size:12px;color:#45451a;letter-spacing:-0.654px;">0.6</div>
<div class="t" style="left:1513.80px;top:473.14px;font-size:12px;color:#45451a;letter-spacing:-0.494px;">0.05</div>
<div class="t" style="left:1565.00px;top:473.14px;font-size:12px;color:#45451a;font-weight:bold;letter-spacing:0.088px;">28.13</div>
<div class="t" style="left:1631.00px;top:473.14px;font-size:12px;color:#45451a;letter-spacing:-0.494px;">54.0</div>
<div class="t" style="left:1721.30px;top:473.14px;font-size:12px;color:#45451a;font-weight:bold;letter-spacing:0.088px;">52.08</div>
<div class="t" style="left:1787.00px;top:473.14px;font-size:12px;color:#45451a;letter-spacing:-0.494px;">82.8</div>
<div class="t" style="left:1198.30px;top:502.14px;font-size:12px;color:#45451a;letter-spacing:-0.385px;">AN1</div>
<div class="t" style="left:1295.00px;top:502.14px;font-size:12px;color:#45451a;letter-spacing:-0.494px;">0.58</div>
<div class="t" style="left:1345.00px;top:502.14px;font-size:12px;color:#45451a;letter-spacing:-0.494px;">0.58</div>
<div class="t" style="left:1394.80px;top:502.14px;font-size:12px;color:#45451a;letter-spacing:-0.219px;">-0.10</div>
<div class="t" style="left:1445.00px;top:502.14px;font-size:12px;color:#45451a;font-weight:bold;letter-spacing:-0.104px;">0.6</div>
<div class="t" style="left:1513.80px;top:502.14px;font-size:12px;color:#45451a;letter-spacing:-0.494px;">0.00</div>
<div class="t" style="left:1565.00px;top:502.14px;font-size:12px;color:#45451a;letter-spacing:-0.494px;">2.19</div>
<div class="t" style="left:1631.00px;top:502.14px;font-size:12px;color:#45451a;letter-spacing:-0.654px;">4.2</div>
<div class="t" style="left:1721.30px;top:502.14px;font-size:12px;color:#45451a;letter-spacing:-0.414px;">52.08</div>
<div class="t" style="left:1787.00px;top:502.14px;font-size:12px;color:#45451a;font-weight:bold;letter-spacing:0.024px;">76.4</div>
<div class="t" style="left:1198.30px;top:531.14px;font-size:12px;color:#45451a;letter-spacing:-0.385px;">AN2</div>
<div class="t" style="left:1295.00px;top:531.14px;font-size:12px;color:#45451a;letter-spacing:-0.219px;">-0.58</div>
<div class="t" style="left:1345.00px;top:531.14px;font-size:12px;color:#45451a;letter-spacing:-0.494px;">0.58</div>
<div class="t" style="left:1394.80px;top:531.14px;font-size:12px;color:#45451a;letter-spacing:-0.219px;">-1.30</div>
<div class="t" style="left:1445.00px;top:531.14px;font-size:12px;color:#45451a;letter-spacing:-0.654px;">0.4</div>
<div class="t" style="left:1513.80px;top:531.14px;font-size:12px;color:#45451a;letter-spacing:-0.494px;">0.05</div>
<div class="t" style="left:1565.00px;top:531.14px;font-size:12px;color:#45451a;letter-spacing:-0.414px;">12.58</div>
<div class="t" style="left:1631.00px;top:531.14px;font-size:12px;color:#45451a;font-weight:bold;letter-spacing:0.024px;">60.4</div>
<div class="t" style="left:1721.30px;top:531.14px;font-size:12px;color:#45451a;letter-spacing:-0.414px;">20.83</div>
<div class="t" style="left:1787.00px;top:531.14px;font-size:12px;color:#45451a;letter-spacing:-0.494px;">60.5</div>
<div class="t" style="left:1001.00px;top:175.37px;font-size:7px;color:#111;font-weight:bold;letter-spacing:-1.200px;">3D</div>
<div class="t" style="left:1097.50px;top:245.14px;font-size:12px;color:#999;font-weight:bold;transform:rotate(28deg);">Y</div>
<div class="t" style="left:1090.50px;top:219.03px;font-size:8px;color:#777;font-weight:bold;transform:rotate(-20deg);">X</div>
</div>
</body>
</html>
